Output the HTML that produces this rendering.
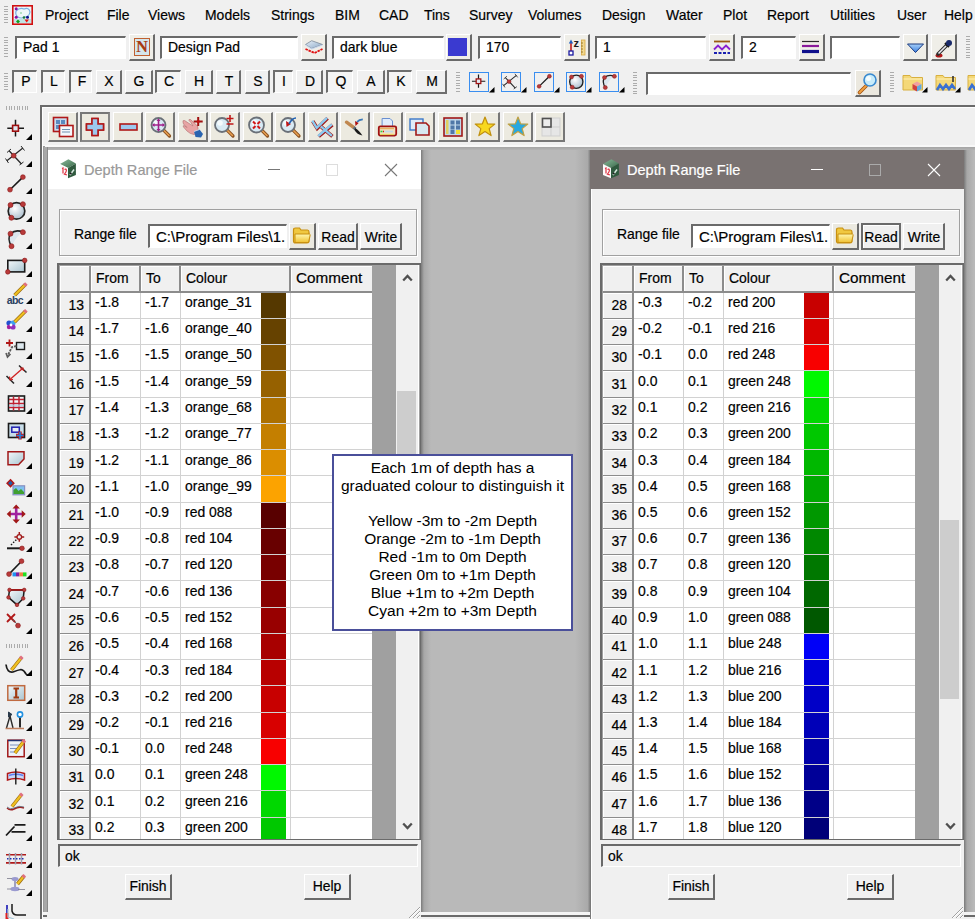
<!DOCTYPE html><html><head><meta charset="utf-8"><style>html,body{margin:0;padding:0;}body{width:975px;height:919px;overflow:hidden;position:relative;background:#f0f0f0;font-family:"Liberation Sans",sans-serif;color:#000;}div{-webkit-text-stroke-width:0.2px;}</style></head><body>
<div style="position:absolute;left:4px;top:6px;width:4px;height:18px;background:repeating-linear-gradient(to bottom,#acacac 0 1px,transparent 1px 2.67px);"></div>
<svg style="position:absolute;left:12px;top:5px;" width="21" height="20" viewBox="0 0 21 20"><rect x="0.8" y="0.8" width="19.4" height="18.4" fill="#eef6f8" stroke="#d01010" stroke-width="1.6"/><path d="M4 6 Q8 2 12 4 Q17 2 18 7 Q17 12 13 12 Q9 14 6 12 Q3 10 4 6Z" fill="none" stroke="#7ab0e0" stroke-width="1.2"/><rect x="2" y="14" width="17" height="4" fill="#bfe4e4"/><circle cx="4.2" cy="3.8" r="1.5" fill="#8a10a0"/><circle cx="4.2" cy="12.2" r="1.5" fill="#8a10a0"/><circle cx="15.5" cy="12.2" r="1.5" fill="#10108a"/><circle cx="12" cy="12.5" r="1.3" fill="#1a7a3a"/><circle cx="9" cy="8" r="1" fill="#a0d8b0"/><path d="M6 14.5 L8 16.5 L6 18.5 L4 16.5Z" fill="#10a020"/><path d="M12.5 14.5 H17 L14.7 17.5Z" fill="#f01010"/></svg>
<div style="position:absolute;left:45px;top:7.10px;font-size:15px;line-height:15px;color:#000;white-space:pre;transform:scaleX(0.93);transform-origin:0 0;">Project</div>
<div style="position:absolute;left:107px;top:7.10px;font-size:15px;line-height:15px;color:#000;white-space:pre;transform:scaleX(0.93);transform-origin:0 0;">File</div>
<div style="position:absolute;left:148px;top:7.10px;font-size:15px;line-height:15px;color:#000;white-space:pre;transform:scaleX(0.93);transform-origin:0 0;">Views</div>
<div style="position:absolute;left:205px;top:7.10px;font-size:15px;line-height:15px;color:#000;white-space:pre;transform:scaleX(0.93);transform-origin:0 0;">Models</div>
<div style="position:absolute;left:271px;top:7.10px;font-size:15px;line-height:15px;color:#000;white-space:pre;transform:scaleX(0.93);transform-origin:0 0;">Strings</div>
<div style="position:absolute;left:335px;top:7.10px;font-size:15px;line-height:15px;color:#000;white-space:pre;transform:scaleX(0.93);transform-origin:0 0;">BIM</div>
<div style="position:absolute;left:379px;top:7.10px;font-size:15px;line-height:15px;color:#000;white-space:pre;transform:scaleX(0.93);transform-origin:0 0;">CAD</div>
<div style="position:absolute;left:424px;top:7.10px;font-size:15px;line-height:15px;color:#000;white-space:pre;transform:scaleX(0.93);transform-origin:0 0;">Tins</div>
<div style="position:absolute;left:469px;top:7.10px;font-size:15px;line-height:15px;color:#000;white-space:pre;transform:scaleX(0.93);transform-origin:0 0;">Survey</div>
<div style="position:absolute;left:528px;top:7.10px;font-size:15px;line-height:15px;color:#000;white-space:pre;transform:scaleX(0.93);transform-origin:0 0;">Volumes</div>
<div style="position:absolute;left:602px;top:7.10px;font-size:15px;line-height:15px;color:#000;white-space:pre;transform:scaleX(0.93);transform-origin:0 0;">Design</div>
<div style="position:absolute;left:666px;top:7.10px;font-size:15px;line-height:15px;color:#000;white-space:pre;transform:scaleX(0.93);transform-origin:0 0;">Water</div>
<div style="position:absolute;left:723px;top:7.10px;font-size:15px;line-height:15px;color:#000;white-space:pre;transform:scaleX(0.93);transform-origin:0 0;">Plot</div>
<div style="position:absolute;left:767px;top:7.10px;font-size:15px;line-height:15px;color:#000;white-space:pre;transform:scaleX(0.93);transform-origin:0 0;">Report</div>
<div style="position:absolute;left:830px;top:7.10px;font-size:15px;line-height:15px;color:#000;white-space:pre;transform:scaleX(0.93);transform-origin:0 0;">Utilities</div>
<div style="position:absolute;left:897px;top:7.10px;font-size:15px;line-height:15px;color:#000;white-space:pre;transform:scaleX(0.93);transform-origin:0 0;">User</div>
<div style="position:absolute;left:944px;top:7.10px;font-size:15px;line-height:15px;color:#000;white-space:pre;transform:scaleX(0.93);transform-origin:0 0;">Help</div>
<div style="position:absolute;left:4px;top:37px;width:4px;height:20px;background:repeating-linear-gradient(to bottom,#acacac 0 1px,transparent 1px 2.67px);"></div>
<div style="position:absolute;left:15px;top:36px;width:111px;height:23px;background:#fff;box-sizing:border-box;border-top:2px solid #6a6a6a;border-left:2px solid #6a6a6a;border-bottom:1px solid #fff;border-right:1px solid #fff;"></div>
<div style="position:absolute;left:23px;top:38.90px;font-size:15px;line-height:15px;color:#000;white-space:pre;transform:scaleX(0.93);transform-origin:0 0;">Pad 1</div>
<div style="position:absolute;left:129px;top:34px;width:26px;height:27px;background:#efeee8;box-sizing:border-box;border-top:1px solid #fff;border-left:1px solid #fff;border-bottom:2px solid #6a6a6a;border-right:2px solid #6a6a6a;"></div>
<div style="position:absolute;left:134px;top:38px;width:16px;height:18px;box-sizing:border-box;border:1px solid #c06030;background:#d4e6ec;color:#a83a10;font:bold 16px/16px 'Liberation Serif',serif;text-align:center;">N</div>
<div style="position:absolute;left:160px;top:36px;width:138px;height:23px;background:#fff;box-sizing:border-box;border-top:2px solid #6a6a6a;border-left:2px solid #6a6a6a;border-bottom:1px solid #fff;border-right:1px solid #fff;"></div>
<div style="position:absolute;left:168px;top:38.90px;font-size:15px;line-height:15px;color:#000;white-space:pre;transform:scaleX(0.93);transform-origin:0 0;">Design Pad</div>
<div style="position:absolute;left:301px;top:34px;width:26px;height:27px;background:#efeee8;box-sizing:border-box;border-top:1px solid #fff;border-left:1px solid #fff;border-bottom:2px solid #6a6a6a;border-right:2px solid #6a6a6a;"></div>
<svg style="position:absolute;left:301px;top:34px;" width="26" height="27" viewBox="0 0 26 27"><defs><linearGradient id="lyg" x1="0" y1="0" x2="1" y2="1"><stop offset="0" stop-color="#e8f0f8"/><stop offset="1" stop-color="#8aa8c8"/></linearGradient></defs><path d="M4.5 10.5 L10.7 6.7 L21.5 10.5 L10.7 14.5Z" fill="url(#lyg)" stroke="#7a8898" stroke-width="0.8"/><path d="M4.5 10.5 L10.7 14.5 L21.5 10.5 L21.5 11.5 L10.7 15.5 L4.5 11.5Z" fill="#c8d8f0"/><path d="M4.5 15 L13.5 19 L21.5 15" stroke="#e01010" stroke-width="1.8" fill="none" stroke-dasharray="2.5 0.8"/></svg>
<div style="position:absolute;left:332px;top:36px;width:112px;height:23px;background:#fff;box-sizing:border-box;border-top:2px solid #6a6a6a;border-left:2px solid #6a6a6a;border-bottom:1px solid #fff;border-right:1px solid #fff;"></div>
<div style="position:absolute;left:340px;top:38.90px;font-size:15px;line-height:15px;color:#000;white-space:pre;transform:scaleX(0.93);transform-origin:0 0;">dark blue</div>
<div style="position:absolute;left:446px;top:34px;width:26px;height:27px;background:#efeee8;box-sizing:border-box;border-top:1px solid #fff;border-left:1px solid #fff;border-bottom:2px solid #6a6a6a;border-right:2px solid #6a6a6a;"></div>
<div style="position:absolute;left:448px;top:38px;width:19px;height:18px;background:#3a3ad0;"></div>
<div style="position:absolute;left:478px;top:36px;width:83px;height:23px;background:#fff;box-sizing:border-box;border-top:2px solid #6a6a6a;border-left:2px solid #6a6a6a;border-bottom:1px solid #fff;border-right:1px solid #fff;"></div>
<div style="position:absolute;left:486px;top:38.90px;font-size:15px;line-height:15px;color:#000;white-space:pre;transform:scaleX(0.93);transform-origin:0 0;">170</div>
<div style="position:absolute;left:564px;top:34px;width:26px;height:27px;background:#efeee8;box-sizing:border-box;border-top:1px solid #fff;border-left:1px solid #fff;border-bottom:2px solid #6a6a6a;border-right:2px solid #6a6a6a;"></div>
<svg style="position:absolute;left:567px;top:37px;" width="20" height="20" viewBox="0 0 20 20"><path d="M4 5 L4 14" stroke="#c02020" stroke-width="1.6"/><path d="M1.8 6.5 L4 2.5 L6.2 6.5Z" fill="#2060c0"/><rect x="2" y="14" width="4" height="4" fill="#fff" stroke="#1a1aa0" stroke-width="1.3"/><text x="6.5" y="10" font-size="11" font-weight="bold" fill="#1a1a1a" font-family="Liberation Sans" style="-webkit-text-stroke-width:0">z</text><rect x="14.5" y="3" width="3.5" height="15" fill="#f0d890" stroke="#d8a840" stroke-width="0.8"/><path d="M14 6 H16 M14 9 H16 M14 12 H16 M14 15 H16" stroke="#8a6a20" stroke-width="0.8"/></svg>
<div style="position:absolute;left:595px;top:36px;width:111px;height:23px;background:#fff;box-sizing:border-box;border-top:2px solid #6a6a6a;border-left:2px solid #6a6a6a;border-bottom:1px solid #fff;border-right:1px solid #fff;"></div>
<div style="position:absolute;left:603px;top:38.90px;font-size:15px;line-height:15px;color:#000;white-space:pre;transform:scaleX(0.93);transform-origin:0 0;">1</div>
<div style="position:absolute;left:709px;top:34px;width:26px;height:27px;background:#efeee8;box-sizing:border-box;border-top:1px solid #fff;border-left:1px solid #fff;border-bottom:2px solid #6a6a6a;border-right:2px solid #6a6a6a;"></div>
<svg style="position:absolute;left:712px;top:37px;" width="20" height="20" viewBox="0 0 20 20"><path d="M2 4.5 H18" stroke="#9a5a10" stroke-width="1.8"/><path d="M2 12.5 L6 8.5 L10 12.5 L14 8.5 L18 12.5" stroke="#8a20d0" stroke-width="1.8" fill="none"/><path d="M2 16 H18" stroke="#1a20b0" stroke-width="2" stroke-dasharray="3 1.5"/></svg>
<div style="position:absolute;left:741px;top:36px;width:55px;height:23px;background:#fff;box-sizing:border-box;border-top:2px solid #6a6a6a;border-left:2px solid #6a6a6a;border-bottom:1px solid #fff;border-right:1px solid #fff;"></div>
<div style="position:absolute;left:749px;top:38.90px;font-size:15px;line-height:15px;color:#000;white-space:pre;transform:scaleX(0.93);transform-origin:0 0;">2</div>
<div style="position:absolute;left:799px;top:34px;width:26px;height:27px;background:#efeee8;box-sizing:border-box;border-top:1px solid #fff;border-left:1px solid #fff;border-bottom:2px solid #6a6a6a;border-right:2px solid #6a6a6a;"></div>
<svg style="position:absolute;left:799px;top:37px;" width="26" height="20" viewBox="0 0 26 20"><path d="M3 4.5 H20" stroke="#2a2a2a" stroke-width="1.2"/><path d="M3 9 H20" stroke="#8a1a9a" stroke-width="2.2"/><path d="M3 14.5 H20" stroke="#10108a" stroke-width="3.2"/></svg>
<div style="position:absolute;left:830px;top:36px;width:70px;height:23px;background:#fff;box-sizing:border-box;border-top:2px solid #6a6a6a;border-left:2px solid #6a6a6a;border-bottom:1px solid #fff;border-right:1px solid #fff;"></div>
<div style="position:absolute;left:903px;top:34px;width:25px;height:27px;background:#efeee8;box-sizing:border-box;border-top:1px solid #fff;border-left:1px solid #fff;border-bottom:2px solid #6a6a6a;border-right:2px solid #6a6a6a;"></div>
<svg style="position:absolute;left:903px;top:37px;" width="25" height="20" viewBox="0 0 25 20"><defs><linearGradient id="tg" x1="0" y1="0" x2="0" y2="1"><stop offset="0" stop-color="#a8d0f8"/><stop offset="1" stop-color="#3a80e0"/></linearGradient></defs><path d="M4.5 7 H20.5 L12.5 15.5Z" fill="url(#tg)" stroke="#1a3a80" stroke-width="1"/></svg>
<div style="position:absolute;left:931px;top:34px;width:26px;height:27px;background:#efeee8;box-sizing:border-box;border-top:1px solid #fff;border-left:1px solid #fff;border-bottom:2px solid #6a6a6a;border-right:2px solid #6a6a6a;"></div>
<svg style="position:absolute;left:931px;top:37px;" width="26" height="22" viewBox="0 0 26 22"><ellipse cx="8" cy="18.5" rx="3.5" ry="2" fill="#b01818"/><path d="M7 17 L15.5 8.5" stroke="#303030" stroke-width="3.6" stroke-linecap="round"/><path d="M7.5 16.5 L15 9" stroke="#e8e8f0" stroke-width="1.6"/><path d="M14 6 L18 10" stroke="#1a1a1a" stroke-width="2"/><circle cx="18" cy="6" r="3" fill="#1a2a6a"/></svg>
<div style="position:absolute;left:966px;top:36px;width:4px;height:24px;background:repeating-linear-gradient(to bottom,#acacac 0 1px,transparent 1px 2.67px);"></div>
<div style="position:absolute;left:4px;top:73px;width:4px;height:18px;background:repeating-linear-gradient(to bottom,#acacac 0 1px,transparent 1px 2.67px);"></div>
<div style="position:absolute;left:12px;top:70px;width:25px;height:23px;background:#f4f4f4;box-sizing:border-box;border-top:2px solid #6e6e6e;border-left:2px solid #6e6e6e;border-bottom:1px solid #fff;border-right:1px solid #fff;"></div>
<div style="position:absolute;left:-174.5px;width:400px;text-align:center;top:72.90px;font-size:15px;line-height:15px;color:#000;white-space:pre;transform:scaleX(0.93);transform-origin:50% 0;">P</div>
<div style="position:absolute;left:41px;top:70px;width:24px;height:23px;background:#f4f4f4;box-sizing:border-box;border-top:2px solid #6e6e6e;border-left:2px solid #6e6e6e;border-bottom:1px solid #fff;border-right:1px solid #fff;"></div>
<div style="position:absolute;left:-146.0px;width:400px;text-align:center;top:72.90px;font-size:15px;line-height:15px;color:#000;white-space:pre;transform:scaleX(0.93);transform-origin:50% 0;">L</div>
<div style="position:absolute;left:69px;top:70px;width:23px;height:23px;background:#f4f4f4;box-sizing:border-box;border-top:2px solid #6e6e6e;border-left:2px solid #6e6e6e;border-bottom:1px solid #fff;border-right:1px solid #fff;"></div>
<div style="position:absolute;left:-118.5px;width:400px;text-align:center;top:72.90px;font-size:15px;line-height:15px;color:#000;white-space:pre;transform:scaleX(0.93);transform-origin:50% 0;">F</div>
<div style="position:absolute;left:96px;top:70px;width:26px;height:24px;background:#f0f0f0;box-sizing:border-box;border-top:1px solid #fff;border-left:1px solid #fff;border-bottom:2px solid #6e6e6e;border-right:2px solid #6e6e6e;"></div>
<div style="position:absolute;left:-91.0px;width:400px;text-align:center;top:73.10px;font-size:15px;line-height:15px;color:#000;white-space:pre;transform:scaleX(0.93);transform-origin:50% 0;">X</div>
<div style="position:absolute;left:125px;top:70px;width:28px;height:24px;background:#f0f0f0;box-sizing:border-box;border-top:1px solid #fff;border-left:1px solid #fff;border-bottom:2px solid #6e6e6e;border-right:2px solid #6e6e6e;"></div>
<div style="position:absolute;left:-61.0px;width:400px;text-align:center;top:73.10px;font-size:15px;line-height:15px;color:#000;white-space:pre;transform:scaleX(0.93);transform-origin:50% 0;">G</div>
<div style="position:absolute;left:155px;top:70px;width:26px;height:23px;background:#f4f4f4;box-sizing:border-box;border-top:2px solid #6e6e6e;border-left:2px solid #6e6e6e;border-bottom:1px solid #fff;border-right:1px solid #fff;"></div>
<div style="position:absolute;left:-31.0px;width:400px;text-align:center;top:72.90px;font-size:15px;line-height:15px;color:#000;white-space:pre;transform:scaleX(0.93);transform-origin:50% 0;">C</div>
<div style="position:absolute;left:185px;top:70px;width:28px;height:24px;background:#f0f0f0;box-sizing:border-box;border-top:1px solid #fff;border-left:1px solid #fff;border-bottom:2px solid #6e6e6e;border-right:2px solid #6e6e6e;"></div>
<div style="position:absolute;left:-1.0px;width:400px;text-align:center;top:73.10px;font-size:15px;line-height:15px;color:#000;white-space:pre;transform:scaleX(0.93);transform-origin:50% 0;">H</div>
<div style="position:absolute;left:216px;top:70px;width:25px;height:24px;background:#f0f0f0;box-sizing:border-box;border-top:1px solid #fff;border-left:1px solid #fff;border-bottom:2px solid #6e6e6e;border-right:2px solid #6e6e6e;"></div>
<div style="position:absolute;left:28.5px;width:400px;text-align:center;top:73.10px;font-size:15px;line-height:15px;color:#000;white-space:pre;transform:scaleX(0.93);transform-origin:50% 0;">T</div>
<div style="position:absolute;left:245px;top:70px;width:25px;height:24px;background:#f0f0f0;box-sizing:border-box;border-top:1px solid #fff;border-left:1px solid #fff;border-bottom:2px solid #6e6e6e;border-right:2px solid #6e6e6e;"></div>
<div style="position:absolute;left:57.5px;width:400px;text-align:center;top:73.10px;font-size:15px;line-height:15px;color:#000;white-space:pre;transform:scaleX(0.93);transform-origin:50% 0;">S</div>
<div style="position:absolute;left:273px;top:70px;width:20px;height:23px;background:#f4f4f4;box-sizing:border-box;border-top:2px solid #6e6e6e;border-left:2px solid #6e6e6e;border-bottom:1px solid #fff;border-right:1px solid #fff;"></div>
<div style="position:absolute;left:84.0px;width:400px;text-align:center;top:72.90px;font-size:15px;line-height:15px;color:#000;white-space:pre;transform:scaleX(0.93);transform-origin:50% 0;">I</div>
<div style="position:absolute;left:296px;top:70px;width:27px;height:24px;background:#f0f0f0;box-sizing:border-box;border-top:1px solid #fff;border-left:1px solid #fff;border-bottom:2px solid #6e6e6e;border-right:2px solid #6e6e6e;"></div>
<div style="position:absolute;left:109.5px;width:400px;text-align:center;top:73.10px;font-size:15px;line-height:15px;color:#000;white-space:pre;transform:scaleX(0.93);transform-origin:50% 0;">D</div>
<div style="position:absolute;left:326px;top:70px;width:27px;height:23px;background:#f4f4f4;box-sizing:border-box;border-top:2px solid #6e6e6e;border-left:2px solid #6e6e6e;border-bottom:1px solid #fff;border-right:1px solid #fff;"></div>
<div style="position:absolute;left:140.5px;width:400px;text-align:center;top:72.90px;font-size:15px;line-height:15px;color:#000;white-space:pre;transform:scaleX(0.93);transform-origin:50% 0;">Q</div>
<div style="position:absolute;left:357px;top:70px;width:28px;height:24px;background:#f0f0f0;box-sizing:border-box;border-top:1px solid #fff;border-left:1px solid #fff;border-bottom:2px solid #6e6e6e;border-right:2px solid #6e6e6e;"></div>
<div style="position:absolute;left:171.0px;width:400px;text-align:center;top:73.10px;font-size:15px;line-height:15px;color:#000;white-space:pre;transform:scaleX(0.93);transform-origin:50% 0;">A</div>
<div style="position:absolute;left:387px;top:70px;width:25px;height:23px;background:#f4f4f4;box-sizing:border-box;border-top:2px solid #6e6e6e;border-left:2px solid #6e6e6e;border-bottom:1px solid #fff;border-right:1px solid #fff;"></div>
<div style="position:absolute;left:200.5px;width:400px;text-align:center;top:72.90px;font-size:15px;line-height:15px;color:#000;white-space:pre;transform:scaleX(0.93);transform-origin:50% 0;">K</div>
<div style="position:absolute;left:416px;top:70px;width:31px;height:24px;background:#f0f0f0;box-sizing:border-box;border-top:1px solid #fff;border-left:1px solid #fff;border-bottom:2px solid #6e6e6e;border-right:2px solid #6e6e6e;"></div>
<div style="position:absolute;left:231.5px;width:400px;text-align:center;top:73.10px;font-size:15px;line-height:15px;color:#000;white-space:pre;transform:scaleX(0.93);transform-origin:50% 0;">M</div>
<div style="position:absolute;left:456px;top:72px;width:4px;height:20px;background:repeating-linear-gradient(to bottom,#acacac 0 1px,transparent 1px 2.67px);"></div>
<div style="position:absolute;left:469px;top:72px;width:20px;height:20px;box-sizing:border-box;border:1.5px solid #3a8ef0;"></div>
<svg style="position:absolute;left:469px;top:72px;" width="20" height="20" viewBox="0 0 20 20"><g transform="translate(0.3,-0.6) scale(0.8)"><path d="M3.3 12.3 H20 M11.5 3.8 V20.5" stroke="#1a1a1a" stroke-width="1.5"/><rect x="8.6" y="9.4" width="5.8" height="5.8" fill="#dfe8f0" stroke="#a01010" stroke-width="1.6"/></g></svg>
<svg style="position:absolute;left:489px;top:87px;" width="6" height="6" viewBox="0 0 6 6"><path d="M5.5 0 L5.5 5.5 L0 5.5Z" fill="#000"/></svg>
<div style="position:absolute;left:501px;top:72px;width:20px;height:20px;box-sizing:border-box;border:1.5px solid #3a8ef0;"></div>
<svg style="position:absolute;left:501px;top:72px;" width="20" height="20" viewBox="0 0 20 20"><g transform="translate(0.3,-0.6) scale(0.8)"><path d="M2.9 17.8 L18.9 5 M5.1 7.7 L17.5 21" stroke="#2a2a2a" stroke-width="1.3"/><path d="M1.5 15.5 L4.5 20 M17 3 L20.5 7.5 M3 9.5 L7 6 M15.5 22 L19.5 19" stroke="#2a2a2a" stroke-width="1"/><circle cx="9.7" cy="12.7" r="2.4" fill="#b83a3a" stroke="#8a1a1a" stroke-width="0.6"/></g></svg>
<svg style="position:absolute;left:521px;top:87px;" width="6" height="6" viewBox="0 0 6 6"><path d="M5.5 0 L5.5 5.5 L0 5.5Z" fill="#000"/></svg>
<div style="position:absolute;left:534px;top:72px;width:20px;height:20px;box-sizing:border-box;border:1.5px solid #3a8ef0;"></div>
<svg style="position:absolute;left:534px;top:72px;" width="20" height="20" viewBox="0 0 20 20"><g transform="translate(0.3,-0.6) scale(0.8)"><path d="M6 18.7 L18.9 6.1" stroke="#1a1a1a" stroke-width="1.6"/><circle cx="6" cy="18.7" r="2.4" fill="#b83a3a" stroke="#8a1a1a" stroke-width="0.6"/><circle cx="18.9" cy="6.1" r="2.4" fill="#b83a3a" stroke="#8a1a1a" stroke-width="0.6"/></g></svg>
<svg style="position:absolute;left:554px;top:87px;" width="6" height="6" viewBox="0 0 6 6"><path d="M5.5 0 L5.5 5.5 L0 5.5Z" fill="#000"/></svg>
<div style="position:absolute;left:566px;top:72px;width:20px;height:20px;box-sizing:border-box;border:1.5px solid #3a8ef0;"></div>
<svg style="position:absolute;left:566px;top:72px;" width="20" height="20" viewBox="0 0 20 20"><g transform="translate(0.3,-0.6) scale(0.8)"><defs><radialGradient id="lg1" cx="0.4" cy="0.35" r="0.7"><stop offset="0" stop-color="#ffffff"/><stop offset="1" stop-color="#a8bccc"/></radialGradient></defs><circle cx="12.5" cy="12.9" r="8.3" fill="url(#lg1)" stroke="#222" stroke-width="1.7"/><circle cx="6.5" cy="7" r="2.5" fill="#b83a3a" stroke="#8a1a1a" stroke-width="0.6"/><circle cx="18.9" cy="6.2" r="2.5" fill="#b83a3a" stroke="#8a1a1a" stroke-width="0.6"/><circle cx="7.4" cy="19.8" r="2.5" fill="#b83a3a" stroke="#8a1a1a" stroke-width="0.6"/></g></svg>
<svg style="position:absolute;left:586px;top:87px;" width="6" height="6" viewBox="0 0 6 6"><path d="M5.5 0 L5.5 5.5 L0 5.5Z" fill="#000"/></svg>
<div style="position:absolute;left:599px;top:72px;width:20px;height:20px;box-sizing:border-box;border:1.5px solid #3a8ef0;"></div>
<svg style="position:absolute;left:599px;top:72px;" width="20" height="20" viewBox="0 0 20 20"><g transform="translate(0.3,-0.6) scale(0.8)"><path d="M7.5 20.2 Q3 13 6.5 7.7 Q12 3 18.9 6.2 Q14 8 7.5 20.2Z" fill="#dce6ee"/><path d="M7.5 20.2 Q3 13 6.5 7.7 Q12 3 18.9 6.2" stroke="#222" stroke-width="1.6" fill="none"/><circle cx="6.5" cy="7.7" r="2.5" fill="#b83a3a" stroke="#8a1a1a" stroke-width="0.6"/><circle cx="18.9" cy="6.2" r="2.5" fill="#b83a3a" stroke="#8a1a1a" stroke-width="0.6"/><circle cx="7.5" cy="20.2" r="2.5" fill="#b83a3a" stroke="#8a1a1a" stroke-width="0.6"/></g></svg>
<svg style="position:absolute;left:619px;top:87px;" width="6" height="6" viewBox="0 0 6 6"><path d="M5.5 0 L5.5 5.5 L0 5.5Z" fill="#000"/></svg>
<div style="position:absolute;left:633px;top:72px;width:4px;height:24px;background:repeating-linear-gradient(to bottom,#acacac 0 1px,transparent 1px 2.67px);"></div>
<div style="position:absolute;left:646px;top:72px;width:205px;height:23px;background:#fff;box-sizing:border-box;border-top:2px solid #6a6a6a;border-left:2px solid #6a6a6a;border-bottom:1px solid #fff;border-right:1px solid #fff;"></div>
<div style="position:absolute;left:855px;top:70px;width:26px;height:27px;background:#ebe8df;box-sizing:border-box;border-top:1px solid #fff;border-left:1px solid #fff;border-bottom:2px solid #6a6a6a;border-right:2px solid #6a6a6a;"></div>
<svg style="position:absolute;left:856px;top:72px;" width="24" height="24" viewBox="0 0 24 24"><path d="M10 14 L3.5 20.5" stroke="#a05010" stroke-width="3.6" stroke-linecap="round"/><path d="M10 14 L3.5 20.5" stroke="#f0a040" stroke-width="2" stroke-linecap="round"/><circle cx="14" cy="8" r="6" fill="#c8ecfa" stroke="#3a8ad0" stroke-width="1.6"/><circle cx="12.5" cy="6.5" r="2.5" fill="#f4fcff"/></svg>
<div style="position:absolute;left:890px;top:72px;width:4px;height:20px;background:repeating-linear-gradient(to bottom,#acacac 0 1px,transparent 1px 2.67px);"></div>
<svg style="position:absolute;left:902px;top:73px;" width="22" height="19" viewBox="0 0 22 19"><path d="M1 2.5 H8 L9.5 4.5 H20.5 V17 H1Z" fill="#f4d878" stroke="#d8b040" stroke-width="1"/><path d="M1.5 6 H20" stroke="#fff0b8" stroke-width="1"/><path d="M10.5 11 L15 8.5 L19.5 11 L15 13.5Z" fill="#f0a0a0"/><path d="M10.5 11 L15 13.5 V18.5 L10.5 16Z" fill="#d04040"/><path d="M15 13.5 L19.5 11 V16 L15 18.5Z" fill="#60a8e0"/></svg>
<svg style="position:absolute;left:922px;top:87px;" width="6" height="6" viewBox="0 0 6 6"><path d="M5.5 0 L5.5 5.5 L0 5.5Z" fill="#000"/></svg>
<svg style="position:absolute;left:935px;top:73px;" width="22" height="19" viewBox="0 0 22 19"><path d="M1 2.5 H8 L9.5 4.5 H20.5 V17 H1Z" fill="#f4d878" stroke="#d8b040" stroke-width="1"/><path d="M1.5 6 H20" stroke="#fff0b8" stroke-width="1"/><path d="M18 3 V9" stroke="#303030" stroke-width="1.6"/><path d="M2 17 L5 12 L8 16 L11 12 L14 16 L17 12 L20 16" stroke="#3a70d0" stroke-width="2.6" fill="none"/></svg>
<svg style="position:absolute;left:955px;top:87px;" width="6" height="6" viewBox="0 0 6 6"><path d="M5.5 0 L5.5 5.5 L0 5.5Z" fill="#000"/></svg>
<svg style="position:absolute;left:967px;top:73px;" width="22" height="19" viewBox="0 0 22 19"><path d="M1 2.5 H8 L9.5 4.5 H20.5 V17 H1Z" fill="#f4d878" stroke="#d8b040" stroke-width="1"/><path d="M1.5 6 H20" stroke="#fff0b8" stroke-width="1"/><path d="M2 17 L5 12 L8 16 L11 12" stroke="#3a70d0" stroke-width="2.6" fill="none"/></svg>
<div style="position:absolute;left:40px;top:105px;width:935px;height:2px;background:#6a6a6a;"></div>
<div style="position:absolute;left:42px;top:107px;width:933px;height:1px;background:#fdfdfd;"></div>
<div style="position:absolute;left:40px;top:105px;width:2px;height:814px;background:#6a6a6a;"></div>
<div style="position:absolute;left:42px;top:107px;width:1px;height:812px;background:#fdfdfd;"></div>
<div style="position:absolute;left:48px;top:112px;width:30px;height:30px;background:#eceae0;box-sizing:border-box;border-top:1px solid #fff;border-left:1px solid #fff;border-bottom:2px solid #777;border-right:2px solid #777;"></div>
<svg style="position:absolute;left:48px;top:112px;" width="30" height="30" viewBox="0 0 30 30"><rect x="5.5" y="5.5" width="14" height="14" fill="#c8dcee" stroke="#b01818" stroke-width="1.6"/><rect x="8" y="8" width="4" height="4" fill="#5a8ac0"/><rect x="13" y="8" width="4" height="4" fill="#5a8ac0"/><rect x="8" y="13" width="4" height="4" fill="#5a8ac0"/><rect x="11.5" y="13.5" width="13.5" height="11" fill="#f4f8fc" stroke="#b01818" stroke-width="1.6"/><path d="M14 17.5 H22 M14 20 H22" stroke="#7090b0" stroke-width="1"/></svg>
<div style="position:absolute;left:80px;top:112px;width:30px;height:30px;box-sizing:border-box;background:#eceae0;border:2px solid #777;border-right-color:#888;border-bottom-color:#888;"></div>
<svg style="position:absolute;left:80px;top:112px;" width="30" height="30" viewBox="0 0 30 30"><path d="M12 6.5 H18 V12 H23.5 V18 H18 V23.5 H12 V18 H6.5 V12 H12Z" fill="#9cc8ee" stroke="#b01818" stroke-width="1.6"/></svg>
<svg style="position:absolute;left:80px;top:112px;" width="30" height="30" viewBox="0 0 30 30"><path d="M12 6.5 H18 V12 H23.5 V18 H18 V23.5 H12 V18 H6.5 V12 H12Z" fill="#9cc8ee" stroke="#b01818" stroke-width="1.6"/></svg>
<div style="position:absolute;left:113px;top:112px;width:30px;height:30px;background:#eceae0;box-sizing:border-box;border-top:1px solid #fff;border-left:1px solid #fff;border-bottom:2px solid #777;border-right:2px solid #777;"></div>
<svg style="position:absolute;left:113px;top:112px;" width="30" height="30" viewBox="0 0 30 30"><rect x="7" y="12" width="17" height="6" fill="#9cc8ee" stroke="#b01818" stroke-width="1.6"/></svg>
<div style="position:absolute;left:145px;top:112px;width:30px;height:30px;background:#eceae0;box-sizing:border-box;border-top:1px solid #fff;border-left:1px solid #fff;border-bottom:2px solid #777;border-right:2px solid #777;"></div>
<svg style="position:absolute;left:145px;top:112px;" width="30" height="30" viewBox="0 0 30 30"><path d="M17.5 17 L24.5 24" stroke="#8a5020" stroke-width="3.2" stroke-linecap="round"/><path d="M18.0 17.5 L24.0 23.5" stroke="#e8a050" stroke-width="1.5" stroke-linecap="round"/><circle cx="13.5" cy="13" r="7" fill="#d8eaf4" stroke="#6a7078" stroke-width="1.8"/><circle cx="11.5" cy="11" r="2.8" fill="#f4fafd"/><path d="M13.5 7.5 V18.5 M8 13 H19" stroke="#a0208a" stroke-width="1.6"/><path d="M11.5 9 L13.5 6.5 L15.5 9Z M11.5 17 L13.5 19.5 L15.5 17Z M9.5 11 L7 13 L9.5 15Z M17.5 11 L20 13 L17.5 15Z" fill="#a0208a"/></svg>
<div style="position:absolute;left:178px;top:112px;width:30px;height:30px;background:#eceae0;box-sizing:border-box;border-top:1px solid #fff;border-left:1px solid #fff;border-bottom:2px solid #777;border-right:2px solid #777;"></div>
<svg style="position:absolute;left:178px;top:112px;" width="30" height="30" viewBox="0 0 30 30"><path d="M5 10 Q4.5 8 6.5 8.5 L15 14 Q13 10 11 8.5 Q10.5 7 12.5 7.5 L19.5 14 Q21 17 19 21 L16 22.5 Q12 22 9 19 L5.5 15 Q4.5 13.5 6 13.5 L9 15.5 L5.5 12Z" fill="#e8a4a4" stroke="#b87878" stroke-width="0.7"/><path d="M16 19.5 L21.5 17.5 L25 22 L23 25.5 L17.5 25Z" fill="#2a64b0"/><path d="M16 19.5 L21.5 17.5" stroke="#d8e8f8" stroke-width="0.8"/><path d="M20.2 5 V14 M15.7 9.5 H24.7" stroke="#a01010" stroke-width="2"/><circle cx="20.2" cy="9.5" r="1.5" fill="#c01010"/></svg>
<div style="position:absolute;left:210px;top:112px;width:30px;height:30px;background:#eceae0;box-sizing:border-box;border-top:1px solid #fff;border-left:1px solid #fff;border-bottom:2px solid #777;border-right:2px solid #777;"></div>
<svg style="position:absolute;left:210px;top:112px;" width="30" height="30" viewBox="0 0 30 30"><path d="M16 17 L23 24" stroke="#8a5020" stroke-width="3.2" stroke-linecap="round"/><path d="M16.5 17.5 L22.5 23.5" stroke="#e8a050" stroke-width="1.5" stroke-linecap="round"/><circle cx="12" cy="13" r="7" fill="#d8eaf4" stroke="#6a7078" stroke-width="1.8"/><circle cx="10" cy="11" r="2.8" fill="#f4fafd"/><path d="M20 3 V10 M16.5 6.5 H23.5 M16.5 12 H23.5" stroke="#c01818" stroke-width="1.6"/></svg>
<div style="position:absolute;left:243px;top:112px;width:30px;height:30px;background:#eceae0;box-sizing:border-box;border-top:1px solid #fff;border-left:1px solid #fff;border-bottom:2px solid #777;border-right:2px solid #777;"></div>
<svg style="position:absolute;left:243px;top:112px;" width="30" height="30" viewBox="0 0 30 30"><path d="M17.5 17 L24.5 24" stroke="#8a5020" stroke-width="3.2" stroke-linecap="round"/><path d="M18.0 17.5 L24.0 23.5" stroke="#e8a050" stroke-width="1.5" stroke-linecap="round"/><circle cx="13.5" cy="13" r="7.5" fill="#d8eaf4" stroke="#6a7078" stroke-width="1.8"/><circle cx="11.5" cy="11" r="3.0" fill="#f4fafd"/><path d="M10 9.5 L12.5 12 M17 9.5 L14.5 12 M10 16.5 L12.5 14 M17 16.5 L14.5 14" stroke="#d01818" stroke-width="2"/></svg>
<div style="position:absolute;left:275px;top:112px;width:30px;height:30px;background:#eceae0;box-sizing:border-box;border-top:1px solid #fff;border-left:1px solid #fff;border-bottom:2px solid #777;border-right:2px solid #777;"></div>
<svg style="position:absolute;left:275px;top:112px;" width="30" height="30" viewBox="0 0 30 30"><path d="M17 17 L24 24" stroke="#8a5020" stroke-width="3.2" stroke-linecap="round"/><path d="M17.5 17.5 L23.5 23.5" stroke="#e8a050" stroke-width="1.5" stroke-linecap="round"/><circle cx="13" cy="13" r="7" fill="#d8eaf4" stroke="#6a7078" stroke-width="1.8"/><circle cx="11" cy="11" r="2.8" fill="#f4fafd"/><path d="M11 9 L11.5 15 L16 12Z" fill="#c01818"/><path d="M14 12 Q17 6 21 6" stroke="#2060b0" stroke-width="1.6" fill="none"/></svg>
<div style="position:absolute;left:308px;top:112px;width:30px;height:30px;background:#eceae0;box-sizing:border-box;border-top:1px solid #fff;border-left:1px solid #fff;border-bottom:2px solid #777;border-right:2px solid #777;"></div>
<svg style="position:absolute;left:308px;top:112px;" width="30" height="30" viewBox="0 0 30 30"><path d="M4.8 9.2 L9.2 16.3 L19.6 6.3" stroke="#a01818" stroke-width="3.6" fill="none"/><path d="M4.3 8.7 L8.7 15.8 L19.1 5.8" stroke="#8ccaf0" stroke-width="2.4" fill="none"/><path d="M10.7 24.5 L24.4 12.9 M13.3 14.8 L24.4 24.4" stroke="#a01818" stroke-width="3.6"/><path d="M10.2 24 L23.9 12.4 M12.8 14.3 L23.9 23.9" stroke="#8ccaf0" stroke-width="2.4"/></svg>
<div style="position:absolute;left:340px;top:112px;width:30px;height:30px;background:#eceae0;box-sizing:border-box;border-top:1px solid #fff;border-left:1px solid #fff;border-bottom:2px solid #777;border-right:2px solid #777;"></div>
<svg style="position:absolute;left:340px;top:112px;" width="30" height="30" viewBox="0 0 30 30"><path d="M6.5 10.2 L13.6 15.4" stroke="#c08850" stroke-width="3.4" stroke-linecap="round"/><path d="M13.6 15.4 L15.5 17" stroke="#607080" stroke-width="3"/><path d="M15 16 Q19 18 22.4 23.6 Q17 22.5 14.5 18Z" fill="#1a1a1a"/><path d="M15 9 L18.7 11 L15.5 14Z" fill="#b01010"/><path d="M17 10 Q19 7.5 22.8 7.3" stroke="#3a78b8" stroke-width="1.8" fill="none"/></svg>
<div style="position:absolute;left:373px;top:112px;width:30px;height:30px;background:#eceae0;box-sizing:border-box;border-top:1px solid #fff;border-left:1px solid #fff;border-bottom:2px solid #777;border-right:2px solid #777;"></div>
<svg style="position:absolute;left:373px;top:112px;" width="30" height="30" viewBox="0 0 30 30"><path d="M9.1 6.5 H17 L19.5 9 V14.5 H9.1Z" fill="#e0ecfc" stroke="#6a90d0" stroke-width="1"/><rect x="5.8" y="14.3" width="17.4" height="9.3" rx="1.5" fill="#f0e0c0" stroke="#a01010" stroke-width="1.8"/><path d="M7 16.5 H21" stroke="#e8b060" stroke-width="1.4"/><path d="M7.5 19.5 H9.5" stroke="#30d040" stroke-width="1.6"/><path d="M10 19.5 H11" stroke="#e01010" stroke-width="1.6"/><path d="M11.5 19.5 H20" stroke="#c0d8e8" stroke-width="1.6"/><path d="M7 22.5 H21" stroke="#e8d060" stroke-width="1.2"/></svg>
<div style="position:absolute;left:405px;top:112px;width:30px;height:30px;background:#eceae0;box-sizing:border-box;border-top:1px solid #fff;border-left:1px solid #fff;border-bottom:2px solid #777;border-right:2px solid #777;"></div>
<svg style="position:absolute;left:405px;top:112px;" width="30" height="30" viewBox="0 0 30 30"><rect x="5" y="7" width="13" height="11" fill="#e0ecf8" stroke="#3a78c8" stroke-width="1.4"/><path d="M11 11 H21 L24 14 V23 H11Z" fill="#d8e8f0" stroke="#a01818" stroke-width="1.6"/></svg>
<div style="position:absolute;left:438px;top:112px;width:30px;height:30px;background:#eceae0;box-sizing:border-box;border-top:1px solid #fff;border-left:1px solid #fff;border-bottom:2px solid #777;border-right:2px solid #777;"></div>
<svg style="position:absolute;left:438px;top:112px;" width="30" height="30" viewBox="0 0 30 30"><rect x="6" y="6" width="18" height="18" fill="#c0d8ea" stroke="#a01818" stroke-width="1.6"/><rect x="8" y="8" width="2.5" height="14" fill="#e0d060"/><rect x="12.5" y="8.5" width="4" height="4" fill="#5078a8"/><rect x="18" y="8.5" width="4" height="4" fill="#5078a8"/><rect x="12.5" y="13.5" width="4" height="4" fill="#5078a8"/><rect x="18" y="13.5" width="4" height="4" fill="#5078a8"/><rect x="12.5" y="18" width="4" height="4" fill="#5078a8"/><rect x="18" y="18" width="4" height="4" fill="#f0e030"/></svg>
<div style="position:absolute;left:470px;top:112px;width:30px;height:30px;background:#eceae0;box-sizing:border-box;border-top:1px solid #fff;border-left:1px solid #fff;border-bottom:2px solid #777;border-right:2px solid #777;"></div>
<svg style="position:absolute;left:470px;top:112px;" width="30" height="30" viewBox="0 0 30 30"><path d="M15 5 L17.6 11.8 L24.8 12.1 L19.2 16.6 L21.1 23.6 L15 19.6 L8.9 23.6 L10.8 16.6 L5.2 12.1 L12.4 11.8Z" fill="#f8d820" stroke="#c09010" stroke-width="1.2" stroke-linejoin="round"/></svg>
<div style="position:absolute;left:503px;top:112px;width:30px;height:30px;background:#eceae0;box-sizing:border-box;border-top:1px solid #fff;border-left:1px solid #fff;border-bottom:2px solid #777;border-right:2px solid #777;"></div>
<svg style="position:absolute;left:503px;top:112px;" width="30" height="30" viewBox="0 0 30 30"><path d="M15 5 L17.6 11.8 L24.8 12.1 L19.2 16.6 L21.1 23.6 L15 19.6 L8.9 23.6 L10.8 16.6 L5.2 12.1 L12.4 11.8Z" fill="#28a8e0" stroke="#c0a040" stroke-width="1.2" stroke-linejoin="round"/></svg>
<div style="position:absolute;left:535px;top:112px;width:30px;height:30px;background:#eceae0;box-sizing:border-box;border-top:1px solid #fff;border-left:1px solid #fff;border-bottom:2px solid #777;border-right:2px solid #777;"></div>
<svg style="position:absolute;left:535px;top:112px;" width="30" height="30" viewBox="0 0 30 30"><rect x="7" y="6" width="18" height="18" fill="#e6e6e6" stroke="#cfcfcf" stroke-width="1"/><path d="M16 6 V24 M7 15 H25" stroke="#cfcfcf" stroke-width="1"/><rect x="7.5" y="6.5" width="8.5" height="8.5" fill="#ececec" stroke="#505050" stroke-width="1.6"/></svg>
<div style="position:absolute;left:43px;top:147px;width:932px;height:772px;background:#b9b9b9;"></div>
<div style="position:absolute;left:43px;top:145px;width:932px;height:2px;background:#f8f8f8;"></div>
<div style="position:absolute;left:43px;top:147px;width:932px;height:3px;background:linear-gradient(to bottom,#a4a4a4,#b4b4b4);"></div>
<div style="position:absolute;left:43px;top:146px;width:2px;height:773px;background:#9a9a9a;"></div>
<div style="position:absolute;left:43px;top:912px;width:932px;height:3px;background:#f4f4f4;"></div>
<div style="position:absolute;left:43px;top:915px;width:932px;height:2px;background:#6a6a6a;"></div>
<div style="position:absolute;left:43px;top:917px;width:932px;height:2px;background:#f0f0f0;"></div>
<div style="position:absolute;left:6px;top:106px;width:24px;height:4px;background:repeating-linear-gradient(to right,#acacac 0 1px,transparent 1px 2.67px);"></div>
<svg style="position:absolute;left:4px;top:116px;" width="28" height="24" viewBox="0 0 28 24"><path d="M3.3 12.3 H20 M11.5 3.8 V20.5" stroke="#1a1a1a" stroke-width="1.5"/><rect x="8.6" y="9.4" width="5.8" height="5.8" fill="#dfe8f0" stroke="#a01010" stroke-width="1.6"/></svg>
<svg style="position:absolute;left:26px;top:134px;" width="6" height="6" viewBox="0 0 6 6"><path d="M6 0 L6 6 L0 6Z" fill="#000"/></svg>
<svg style="position:absolute;left:4px;top:143px;" width="28" height="24" viewBox="0 0 28 24"><path d="M2.9 17.8 L18.9 5 M5.1 7.7 L17.5 21" stroke="#2a2a2a" stroke-width="1.3"/><path d="M1.5 15.5 L4.5 20 M17 3 L20.5 7.5 M3 9.5 L7 6 M15.5 22 L19.5 19" stroke="#2a2a2a" stroke-width="1"/><circle cx="9.7" cy="12.7" r="2.4" fill="#b83a3a" stroke="#8a1a1a" stroke-width="0.6"/></svg>
<svg style="position:absolute;left:26px;top:161px;" width="6" height="6" viewBox="0 0 6 6"><path d="M6 0 L6 6 L0 6Z" fill="#000"/></svg>
<svg style="position:absolute;left:4px;top:171px;" width="28" height="24" viewBox="0 0 28 24"><path d="M6 18.7 L18.9 6.1" stroke="#1a1a1a" stroke-width="1.6"/><circle cx="6" cy="18.7" r="2.4" fill="#b83a3a" stroke="#8a1a1a" stroke-width="0.6"/><circle cx="18.9" cy="6.1" r="2.4" fill="#b83a3a" stroke="#8a1a1a" stroke-width="0.6"/></svg>
<svg style="position:absolute;left:26px;top:188px;" width="6" height="6" viewBox="0 0 6 6"><path d="M6 0 L6 6 L0 6Z" fill="#000"/></svg>
<svg style="position:absolute;left:4px;top:198px;" width="28" height="24" viewBox="0 0 28 24"><defs><radialGradient id="lg1" cx="0.4" cy="0.35" r="0.7"><stop offset="0" stop-color="#ffffff"/><stop offset="1" stop-color="#a8bccc"/></radialGradient></defs><circle cx="12.5" cy="12.9" r="8.3" fill="url(#lg1)" stroke="#222" stroke-width="1.7"/><circle cx="6.5" cy="7" r="2.5" fill="#b83a3a" stroke="#8a1a1a" stroke-width="0.6"/><circle cx="18.9" cy="6.2" r="2.5" fill="#b83a3a" stroke="#8a1a1a" stroke-width="0.6"/><circle cx="7.4" cy="19.8" r="2.5" fill="#b83a3a" stroke="#8a1a1a" stroke-width="0.6"/></svg>
<svg style="position:absolute;left:26px;top:216px;" width="6" height="6" viewBox="0 0 6 6"><path d="M6 0 L6 6 L0 6Z" fill="#000"/></svg>
<svg style="position:absolute;left:4px;top:226px;" width="28" height="24" viewBox="0 0 28 24"><path d="M7.5 20.2 Q3 13 6.5 7.7 Q12 3 18.9 6.2 Q14 8 7.5 20.2Z" fill="#dce6ee"/><path d="M7.5 20.2 Q3 13 6.5 7.7 Q12 3 18.9 6.2" stroke="#222" stroke-width="1.6" fill="none"/><circle cx="6.5" cy="7.7" r="2.5" fill="#b83a3a" stroke="#8a1a1a" stroke-width="0.6"/><circle cx="18.9" cy="6.2" r="2.5" fill="#b83a3a" stroke="#8a1a1a" stroke-width="0.6"/><circle cx="7.5" cy="20.2" r="2.5" fill="#b83a3a" stroke="#8a1a1a" stroke-width="0.6"/></svg>
<svg style="position:absolute;left:26px;top:243px;" width="6" height="6" viewBox="0 0 6 6"><path d="M6 0 L6 6 L0 6Z" fill="#000"/></svg>
<svg style="position:absolute;left:4px;top:253px;" width="28" height="24" viewBox="0 0 28 24"><defs><linearGradient id="lg2" x1="0" y1="0" x2="1" y2="1"><stop offset="0" stop-color="#f4f8fa"/><stop offset="1" stop-color="#a8c4d0"/></linearGradient></defs><rect x="3.8" y="7.4" width="16.9" height="11.5" fill="url(#lg2)" stroke="#1a1a1a" stroke-width="1.6"/><circle cx="20.7" cy="7.4" r="2.3" fill="#b83a3a" stroke="#8a1a1a" stroke-width="0.6"/><circle cx="3.8" cy="18.9" r="2.3" fill="#b83a3a" stroke="#8a1a1a" stroke-width="0.6"/></svg>
<svg style="position:absolute;left:26px;top:271px;" width="6" height="6" viewBox="0 0 6 6"><path d="M6 0 L6 6 L0 6Z" fill="#000"/></svg>
<svg style="position:absolute;left:4px;top:281px;" width="28" height="24" viewBox="0 0 28 24"><text x="2.8" y="22.8" font-size="10.5" font-weight="bold" fill="#2a4060" font-family="Liberation Sans" letter-spacing="-0.6">abc</text><path d="M10.6 14.3 L21.6 3.3" stroke="#9a6a10" stroke-width="3.6" stroke-linecap="butt"/><path d="M10.6 14.3 L21.6 3.3" stroke="#f0c020" stroke-width="2.2"/><path d="M20.400000000000002 4.5 L22.400000000000002 2.5" stroke="#e07080" stroke-width="3.6"/></svg>
<svg style="position:absolute;left:26px;top:298px;" width="6" height="6" viewBox="0 0 6 6"><path d="M6 0 L6 6 L0 6Z" fill="#000"/></svg>
<svg style="position:absolute;left:4px;top:308px;" width="28" height="24" viewBox="0 0 28 24"><circle cx="5" cy="15" r="2.6" fill="#2050d0"/><circle cx="9" cy="15" r="2.6" fill="#40a0f0"/><circle cx="9" cy="19" r="2.6" fill="#9030c0"/><circle cx="5" cy="19" r="2.2" fill="#a020a0"/><circle cx="7" cy="17" r="1.4" fill="#fff"/><path d="M10.6 14 L21.6 3" stroke="#9a6a10" stroke-width="3.6" stroke-linecap="butt"/><path d="M10.6 14 L21.6 3" stroke="#f0c020" stroke-width="2.2"/><path d="M20.400000000000002 4.2 L22.400000000000002 2.2" stroke="#e07080" stroke-width="3.6"/></svg>
<svg style="position:absolute;left:26px;top:326px;" width="6" height="6" viewBox="0 0 6 6"><path d="M6 0 L6 6 L0 6Z" fill="#000"/></svg>
<svg style="position:absolute;left:4px;top:336px;" width="28" height="24" viewBox="0 0 28 24"><path d="M5.5 3.5 V10.5 M2 7 H9" stroke="#b01818" stroke-width="1.8"/><rect x="12.5" y="6.5" width="8" height="7" fill="#dde8ee" stroke="#1a1a1a" stroke-width="1.4"/><path d="M12.5 10 L8 11 L3.5 20" stroke="#5a5a5a" stroke-width="1.8" fill="none" stroke-dasharray="2.5 1"/><path d="M2 17 L3.5 21 L6.5 18" stroke="#5a5a5a" stroke-width="1.6" fill="none"/></svg>
<svg style="position:absolute;left:26px;top:353px;" width="6" height="6" viewBox="0 0 6 6"><path d="M6 0 L6 6 L0 6Z" fill="#000"/></svg>
<svg style="position:absolute;left:4px;top:363px;" width="28" height="24" viewBox="0 0 28 24"><path d="M2.5 13 L10 20.5 M15 2.5 L22.5 9.5" stroke="#2a2a2a" stroke-width="1.6"/><path d="M6.5 16 L18.5 5.5" stroke="#d02020" stroke-width="1.3"/><path d="M5.5 13.5 L6 16.8 L9 16.5 M16 5 L19 5 L19.5 8" stroke="#d02020" stroke-width="1.2" fill="none"/></svg>
<svg style="position:absolute;left:26px;top:381px;" width="6" height="6" viewBox="0 0 6 6"><path d="M6 0 L6 6 L0 6Z" fill="#000"/></svg>
<svg style="position:absolute;left:4px;top:391px;" width="28" height="24" viewBox="0 0 28 24"><rect x="4.5" y="5" width="16" height="15" fill="#f0f4f6" stroke="#1a1a1a" stroke-width="1.6"/><path d="M5 8.5 H20 M5 12.5 H20 M5 16.5 H20" stroke="#c02030" stroke-width="1.5"/><path d="M9.5 5.5 V19.5 M15 5.5 V19.5" stroke="#c02030" stroke-width="1.5"/><rect x="5.5" y="13.5" width="14" height="2.2" fill="#b8cce0" opacity="0.8"/></svg>
<svg style="position:absolute;left:26px;top:408px;" width="6" height="6" viewBox="0 0 6 6"><path d="M6 0 L6 6 L0 6Z" fill="#000"/></svg>
<svg style="position:absolute;left:4px;top:418px;" width="28" height="24" viewBox="0 0 28 24"><rect x="4.5" y="5.5" width="16" height="14" fill="#c8dde8" stroke="#1a1a1a" stroke-width="1.6"/><rect x="7.8" y="9.2" width="7.5" height="5" fill="#e8eef4" stroke="#2020b0" stroke-width="1.5"/><path d="M16 13.5 V21.5 M12 17.5 H20" stroke="#c01818" stroke-width="3.4"/><path d="M16 14 V21 M12.5 17.5 H19.5" stroke="#2080e0" stroke-width="1.6"/></svg>
<svg style="position:absolute;left:26px;top:436px;" width="6" height="6" viewBox="0 0 6 6"><path d="M6 0 L6 6 L0 6Z" fill="#000"/></svg>
<svg style="position:absolute;left:4px;top:446px;" width="28" height="24" viewBox="0 0 28 24"><path d="M4 5.8 H20 V13 L14.5 18.8 H4Z" fill="url(#lg2)" stroke="#a01818" stroke-width="1.5"/></svg>
<svg style="position:absolute;left:26px;top:463px;" width="6" height="6" viewBox="0 0 6 6"><path d="M6 0 L6 6 L0 6Z" fill="#000"/></svg>
<svg style="position:absolute;left:4px;top:473px;" width="28" height="24" viewBox="0 0 28 24"><path d="M6.5 6.8 L9.8 10.2 L6.5 13.6 L3.1 10.2Z" fill="#2060b0" stroke="#b01818" stroke-width="1.5"/><rect x="9" y="12.8" width="11.6" height="9" fill="#80c0f0" stroke="#8890c0" stroke-width="1.2"/><path d="M9.5 21 L9.5 17 L12 15 L14.5 18 L17 16 L20 19 L20 21Z" fill="#40a030"/></svg>
<svg style="position:absolute;left:26px;top:491px;" width="6" height="6" viewBox="0 0 6 6"><path d="M6 0 L6 6 L0 6Z" fill="#000"/></svg>
<svg style="position:absolute;left:4px;top:501px;" width="28" height="24" viewBox="0 0 28 24"><path d="M12.2 6 V20 M5.2 13 H19.2" stroke="#a020a0" stroke-width="2.6"/><path d="M8.5 7.5 L12.2 3.5 L15.9 7.5Z M8.5 18.5 L12.2 22.5 L15.9 18.5Z M6.7 9.3 L2.7 13 L6.7 16.7Z M17.7 9.3 L21.7 13 L17.7 16.7Z" fill="#a01818"/></svg>
<svg style="position:absolute;left:26px;top:518px;" width="6" height="6" viewBox="0 0 6 6"><path d="M6 0 L6 6 L0 6Z" fill="#000"/></svg>
<svg style="position:absolute;left:4px;top:528px;" width="28" height="24" viewBox="0 0 28 24"><path d="M3 20.3 H17" stroke="#1a1a1a" stroke-width="2"/><path d="M7 17 L13 11" stroke="#1a1a1a" stroke-width="1.4" stroke-dasharray="1.5 1.5"/><path d="M15.3 4 V13.8 M10.4 8.9 H20.2" stroke="#a01818" stroke-width="1.5"/><circle cx="15.3" cy="8.9" r="2.3" fill="#eee" stroke="#a01818" stroke-width="1.3"/><circle cx="18" cy="20.3" r="2.3" fill="#b83a3a" stroke="#8a1a1a" stroke-width="0.6"/></svg>
<svg style="position:absolute;left:26px;top:546px;" width="6" height="6" viewBox="0 0 6 6"><path d="M6 0 L6 6 L0 6Z" fill="#000"/></svg>
<svg style="position:absolute;left:4px;top:556px;" width="28" height="24" viewBox="0 0 28 24"><path d="M5 18.1 L17.5 5.2" stroke="#1a1a1a" stroke-width="1.6"/><circle cx="5" cy="18.1" r="2.4" fill="#b83a3a" stroke="#8a1a1a" stroke-width="0.6"/><circle cx="17.5" cy="5.2" r="2.4" fill="#b83a3a" stroke="#8a1a1a" stroke-width="0.6"/><rect x="8.5" y="16.4" width="3.5" height="4" fill="#2090f0"/><rect x="12" y="16.4" width="3.5" height="4" fill="#8020a0"/><rect x="15.5" y="16.4" width="3.5" height="4" fill="#f08040"/><rect x="19" y="16.4" width="3.5" height="4" fill="#20e020"/></svg>
<svg style="position:absolute;left:26px;top:573px;" width="6" height="6" viewBox="0 0 6 6"><path d="M6 0 L6 6 L0 6Z" fill="#000"/></svg>
<svg style="position:absolute;left:4px;top:583px;" width="28" height="24" viewBox="0 0 28 24"><path d="M5.5 6.9 H20.2 L19.2 15.4 L13 21.9 L4.5 14.4Z" fill="url(#lg2)" stroke="#1a1a1a" stroke-width="1.5"/><path d="M4 6.9 H21.5" stroke="#a01818" stroke-width="1.8"/><circle cx="5.5" cy="6.9" r="1.8" fill="#b83a3a" stroke="#8a1a1a" stroke-width="0.6"/><circle cx="20.2" cy="6.9" r="1.8" fill="#b83a3a" stroke="#8a1a1a" stroke-width="0.6"/><circle cx="19.2" cy="15.4" r="1.8" fill="#b83a3a" stroke="#8a1a1a" stroke-width="0.6"/><circle cx="13" cy="21.9" r="1.8" fill="#b83a3a" stroke="#8a1a1a" stroke-width="0.6"/><circle cx="4.5" cy="14.4" r="1.8" fill="#b83a3a" stroke="#8a1a1a" stroke-width="0.6"/></svg>
<svg style="position:absolute;left:26px;top:600px;" width="6" height="6" viewBox="0 0 6 6"><path d="M6 0 L6 6 L0 6Z" fill="#000"/></svg>
<svg style="position:absolute;left:4px;top:610px;" width="28" height="24" viewBox="0 0 28 24"><path d="M3 4 L11 12 M11 4 L3 12" stroke="#b01818" stroke-width="1.8"/><path d="M9 10 L15 16" stroke="#5a5a5a" stroke-width="1.2" stroke-dasharray="1.5 1"/><circle cx="14" cy="15.6" r="2.4" fill="#b83a3a" stroke="#8a1a1a" stroke-width="0.6"/></svg>
<svg style="position:absolute;left:26px;top:628px;" width="6" height="6" viewBox="0 0 6 6"><path d="M6 0 L6 6 L0 6Z" fill="#000"/></svg>
<div style="position:absolute;left:6px;top:644px;width:24px;height:4px;background:repeating-linear-gradient(to right,#acacac 0 1px,transparent 1px 2.67px);"></div>
<svg style="position:absolute;left:4px;top:653px;" width="28" height="24" viewBox="0 0 28 24"><path d="M2 11.5 Q3 20 9 19 Q14 17 17 16.5 Q20 17 22 21 Q24 23 27 21" stroke="#1a1a1a" stroke-width="1.7" fill="none"/><path d="M7.5 17 L17.5 4.5" stroke="#9a6a10" stroke-width="3.6" stroke-linecap="butt"/><path d="M7.5 17 L17.5 4.5" stroke="#f0c020" stroke-width="2.2"/><path d="M16.3 5.7 L18.3 3.7" stroke="#e07080" stroke-width="3.6"/></svg>
<svg style="position:absolute;left:26px;top:670px;" width="6" height="6" viewBox="0 0 6 6"><path d="M6 0 L6 6 L0 6Z" fill="#000"/></svg>
<svg style="position:absolute;left:4px;top:680px;" width="28" height="24" viewBox="0 0 28 24"><rect x="3.8" y="5.7" width="16.9" height="14.6" fill="url(#lg2)" stroke="#c06a40" stroke-width="1.5"/><path d="M9.5 8.5 H15 M9.5 17.5 H15 M12.2 8.5 V17.5" stroke="#a03a10" stroke-width="2.2"/></svg>
<svg style="position:absolute;left:26px;top:698px;" width="6" height="6" viewBox="0 0 6 6"><path d="M6 0 L6 6 L0 6Z" fill="#000"/></svg>
<svg style="position:absolute;left:4px;top:708px;" width="28" height="24" viewBox="0 0 28 24"><path d="M6 8 L2.5 20 M6 8 L9 20" stroke="#2a2a2a" stroke-width="1.4"/><path d="M4.5 4 L8 6.5 L4.5 9Z" fill="#2a3a4a" stroke="#2a3a4a"/><path d="M16 9 V19.5" stroke="#2a2a2a" stroke-width="2"/><circle cx="16" cy="6.5" r="2.6" fill="#fff" stroke="#2090e0" stroke-width="1.6"/><path d="M1.5 20.5 H20" stroke="#c08060" stroke-width="1.5"/></svg>
<svg style="position:absolute;left:26px;top:725px;" width="6" height="6" viewBox="0 0 6 6"><path d="M6 0 L6 6 L0 6Z" fill="#000"/></svg>
<svg style="position:absolute;left:4px;top:735px;" width="28" height="24" viewBox="0 0 28 24"><rect x="3.8" y="5.2" width="16.4" height="16.5" fill="#eef2f8" stroke="#a01818" stroke-width="1.5"/><path d="M4 5.5 H19" stroke="#203070" stroke-width="1.5"/><path d="M6 10 H16 M6 13.5 H14 M6 17 H12" stroke="#7890c0" stroke-width="1"/><path d="M11 18 L20 6" stroke="#9a6a10" stroke-width="3.6" stroke-linecap="butt"/><path d="M11 18 L20 6" stroke="#f0c020" stroke-width="2.2"/><path d="M18.8 7.2 L20.8 5.2" stroke="#e07080" stroke-width="3.6"/></svg>
<svg style="position:absolute;left:26px;top:753px;" width="6" height="6" viewBox="0 0 6 6"><path d="M6 0 L6 6 L0 6Z" fill="#000"/></svg>
<svg style="position:absolute;left:4px;top:763px;" width="28" height="24" viewBox="0 0 28 24"><path d="M3.5 10.5 Q12 7.5 20.5 10.5 V17 Q12 14 3.5 17Z" fill="#c8d8f8" stroke="#b01818" stroke-width="1.5"/><path d="M5 12.5 Q12 10 19 12.5" stroke="#6080f0" stroke-width="1.5" fill="none"/><path d="M11.8 5.5 V21.5" stroke="#1a1a1a" stroke-width="1.4"/></svg>
<svg style="position:absolute;left:26px;top:780px;" width="6" height="6" viewBox="0 0 6 6"><path d="M6 0 L6 6 L0 6Z" fill="#000"/></svg>
<svg style="position:absolute;left:4px;top:790px;" width="28" height="24" viewBox="0 0 28 24"><path d="M3 18 Q6 21 10 19 Q15 16 20 18" stroke="#a02020" stroke-width="1.5" fill="none"/><path d="M3 17 Q6 20 10 18 Q15 15 20 17" stroke="#5a6a7a" stroke-width="0.8" fill="none"/><path d="M8 16.5 L17.5 4.5" stroke="#9a6a10" stroke-width="3.6" stroke-linecap="butt"/><path d="M8 16.5 L17.5 4.5" stroke="#f0c020" stroke-width="2.2"/><path d="M16.3 5.7 L18.3 3.7" stroke="#e07080" stroke-width="3.6"/></svg>
<svg style="position:absolute;left:26px;top:808px;" width="6" height="6" viewBox="0 0 6 6"><path d="M6 0 L6 6 L0 6Z" fill="#000"/></svg>
<svg style="position:absolute;left:4px;top:817px;" width="28" height="24" viewBox="0 0 28 24"><path d="M10.5 7.8 H21.5 M7.5 14.8 H21.5" stroke="#1a1a1a" stroke-width="1.8"/><path d="M2 18.5 L10.5 9.5" stroke="#1a1a1a" stroke-width="1.8"/></svg>
<svg style="position:absolute;left:26px;top:835px;" width="6" height="6" viewBox="0 0 6 6"><path d="M6 0 L6 6 L0 6Z" fill="#000"/></svg>
<svg style="position:absolute;left:4px;top:845px;" width="28" height="24" viewBox="0 0 28 24"><path d="M2 9.7 H22 M2 17.9 H22" stroke="#b01818" stroke-width="1.6"/><path d="M5.5 8 V19.5 M11.5 8 V19.5 M17.5 8 V19.5" stroke="#a0a0b0" stroke-width="1.5"/><path d="M3 13.8 H21" stroke="#2030b0" stroke-width="1.5" stroke-dasharray="1.5 1.5"/></svg>
<svg style="position:absolute;left:26px;top:862px;" width="6" height="6" viewBox="0 0 6 6"><path d="M6 0 L6 6 L0 6Z" fill="#000"/></svg>
<svg style="position:absolute;left:4px;top:872px;" width="28" height="24" viewBox="0 0 28 24"><ellipse cx="11" cy="7" rx="3.5" ry="2" fill="#9a9ad0"/><ellipse cx="11" cy="17" rx="4.5" ry="2.2" fill="#9a9ad0"/><path d="M11 9 V15" stroke="#a0a0c0" stroke-width="2"/><path d="M3 6.5 H8 M3 17 H7 M14 17.5 H21" stroke="#7a7a8a" stroke-width="0.8"/><path d="M13.5 12 L20 4" stroke="#9a6a10" stroke-width="3.6" stroke-linecap="butt"/><path d="M13.5 12 L20 4" stroke="#f0c020" stroke-width="2.2"/><path d="M18.8 5.2 L20.8 3.2" stroke="#e07080" stroke-width="3.6"/></svg>
<svg style="position:absolute;left:26px;top:890px;" width="6" height="6" viewBox="0 0 6 6"><path d="M6 0 L6 6 L0 6Z" fill="#000"/></svg>
<svg style="position:absolute;left:4px;top:903px;" width="28" height="16" viewBox="0 0 28 16"><path d="M3 2 V14" stroke="#4040c0" stroke-width="2"/><path d="M3 10 V16" stroke="#e02020" stroke-width="3"/><path d="M8 1 V8 Q9 12 13 12 H22" stroke="#1a1a1a" stroke-width="1.5" fill="none"/><path d="M4 6 V14 L10 16" stroke="#a8c8d8" stroke-width="1.2" fill="none"/></svg>
<div style="position:absolute;left:421px;top:150px;width:10px;height:762px;background:linear-gradient(to right,#7a7a7a,#a8a8a8 30%,#b9b9b9);"></div>
<div style="position:absolute;left:47px;top:150px;width:374px;height:769px;background:#f0f0f0;"></div>
<div style="position:absolute;left:44px;top:147px;width:3px;height:765px;background:#a8a8a8;"></div>
<div style="position:absolute;left:47px;top:147px;width:1px;height:765px;background:#8a8a8a;"></div>
<div style="position:absolute;left:48px;top:150px;width:373px;height:39px;background:#fff;"></div>
<svg style="position:absolute;left:60px;top:159px;" width="18" height="21" viewBox="0 0 18 21"><defs><linearGradient id="cg" x1="0" y1="0" x2="1" y2="1"><stop offset="0" stop-color="#8ab89a"/><stop offset="1" stop-color="#3a6a4a"/></linearGradient></defs><path d="M0 5.1 L8.4 0.3 L15.9 4.5 L8 9Z" fill="url(#cg)"/><path d="M8 9 L15.9 4.5 L15.9 15.9 L8 19.3Z" fill="#2f5a3e"/><path d="M0 5.1 L8 9 L8 19.3 L0 15.9Z" fill="#fbfbfb"/><path d="M2 9.5 L3 9 V14.5 M4.5 10.5 Q6.2 9.3 6.4 11.5 Q6.3 13 4.5 15.2 L6.8 15.8" stroke="#e03040" stroke-width="1.2" fill="none"/><path d="M10 16 L14 10.5" stroke="#d8e8e0" stroke-width="1.5"/><circle cx="10.8" cy="14.5" r="1" fill="#1a1a1a"/></svg>
<div style="position:absolute;left:84px;top:161.50px;font-size:15px;line-height:15px;color:#999;white-space:pre;transform:scaleX(0.97);transform-origin:0 0;">Depth Range File</div>
<div style="position:absolute;left:268px;top:169px;width:12px;height:1px;background:#777;"></div>
<div style="position:absolute;left:326px;top:164px;width:12px;height:12px;box-sizing:border-box;border:1px solid #ddd;"></div>
<svg style="position:absolute;left:384px;top:163px;" width="14" height="14" viewBox="0 0 14 14"><path d="M1 1 L13 13 M13 1 L1 13" stroke="#777" stroke-width="1.1"/></svg>
<div style="position:absolute;left:59px;top:209px;width:358px;height:47px;box-sizing:border-box;border:1px solid #a0a0a0;border-right-color:#a0a0a0;box-shadow:inset 1px 1px 0 #fff, 1px 1px 0 #fff;"></div>
<div style="position:absolute;left:74px;top:226.00px;font-size:15px;line-height:15px;color:#000;white-space:pre;transform:scaleX(0.93);transform-origin:0 0;">Range file</div>
<div style="position:absolute;left:148px;top:224px;width:139px;height:24px;background:#fff;box-sizing:border-box;border-top:2px solid #6a6a6a;border-left:2px solid #6a6a6a;border-bottom:1px solid #fff;border-right:1px solid #fff;"></div>
<div style="position:absolute;left:150px;top:226px;width:136px;height:21px;overflow:hidden;"><div style="position:absolute;left:6px;top:3.30px;font-size:15px;line-height:15px;white-space:pre;">C:\Program Files\1.</div></div>
<div style="position:absolute;left:289px;top:223px;width:27px;height:27px;background:#ebe9e0;box-sizing:border-box;border-top:1px solid #fff;border-left:1px solid #fff;border-bottom:2px solid #6a6a6a;border-right:2px solid #6a6a6a;"></div>
<svg style="position:absolute;left:292px;top:227px;" width="20" height="20" viewBox="0 0 20 20"><defs><linearGradient id="fg" x1="0" y1="0" x2="0" y2="1"><stop offset="0" stop-color="#fff8b0"/><stop offset="1" stop-color="#f0c030"/></linearGradient></defs><path d="M1.5 3 Q1.5 1 3.5 1 L7.5 1 L9 3 L15.5 3 Q17 3 17 5 L17 14.5 Q17 16 15 16 L3.5 16 Q1.5 16 1.5 14Z" fill="#f0c840" stroke="#c89010" stroke-width="1.2"/><path d="M3 7 L17.5 7 Q18.5 7 18 9 L16.5 15.5 L3 15.5Z" fill="url(#fg)" stroke="#c89010" stroke-width="1"/></svg>
<div style="position:absolute;left:318px;top:223px;width:40px;height:27px;background:#f0f0f0;box-sizing:border-box;border-top:1px solid #fff;border-left:1px solid #fff;border-bottom:2px solid #6a6a6a;border-right:2px solid #6a6a6a;"></div>
<div style="position:absolute;left:138px;width:400px;text-align:center;top:228.80px;font-size:15px;line-height:15px;color:#000;white-space:pre;transform:scaleX(0.93);transform-origin:50% 0;">Read</div>
<div style="position:absolute;left:360px;top:223px;width:42px;height:27px;background:#f0f0f0;box-sizing:border-box;border-top:1px solid #fff;border-left:1px solid #fff;border-bottom:2px solid #6a6a6a;border-right:2px solid #6a6a6a;"></div>
<div style="position:absolute;left:181px;width:400px;text-align:center;top:228.80px;font-size:15px;line-height:15px;color:#000;white-space:pre;transform:scaleX(0.93);transform-origin:50% 0;">Write</div>
<div style="position:absolute;left:57px;top:263px;width:364px;height:577px;box-sizing:border-box;border-top:2px solid #6a6a6a;border-left:2px solid #6a6a6a;border-bottom:1px solid #6a6a6a;border-right:1px solid #6a6a6a;background:#a0a0a0;overflow:hidden;">
<div style="position:absolute;left:1px;top:1px;width:312px;height:25px;background:#f0f0f0;"></div><div style="position:absolute;left:1px;top:1px;width:312px;height:1px;background:#fff;"></div><div style="position:absolute;left:1px;top:1px;width:1px;height:25px;background:#fff;"></div><div style="position:absolute;left:1px;top:26px;width:312px;height:2px;background:#8c8c8c;"></div><div style="position:absolute;left:80px;top:1px;width:2px;height:27px;background:#8c8c8c;"></div><div style="position:absolute;left:82px;top:2px;width:1px;height:24px;background:#fff;"></div><div style="position:absolute;left:120px;top:1px;width:2px;height:27px;background:#8c8c8c;"></div><div style="position:absolute;left:122px;top:2px;width:1px;height:24px;background:#fff;"></div><div style="position:absolute;left:230px;top:1px;width:2px;height:27px;background:#8c8c8c;"></div><div style="position:absolute;left:232px;top:2px;width:1px;height:24px;background:#fff;"></div><div style="position:absolute;left:30px;top:1px;width:2px;height:574px;background:#8c8c8c;"></div><div style="position:absolute;left:32px;top:2px;width:1px;height:24px;background:#fff;"></div><div style="position:absolute;left:37px;top:5.30px;font-size:15px;line-height:15px;white-space:pre;transform:scaleX(0.93);transform-origin:0 0;">From</div><div style="position:absolute;left:87px;top:5.30px;font-size:15px;line-height:15px;white-space:pre;transform:scaleX(0.93);transform-origin:0 0;">To</div><div style="position:absolute;left:127px;top:5.30px;font-size:15px;line-height:15px;white-space:pre;transform:scaleX(0.93);transform-origin:0 0;">Colour</div><div style="position:absolute;left:237px;top:5.30px;font-size:15px;line-height:15px;white-space:pre;transform:scaleX(0.93);transform-origin:0 0;transform:scaleX(1.02);">Comment</div><div style="position:absolute;left:1px;top:28px;width:29px;height:25px;background:#f0f0f0;"></div><div style="position:absolute;left:1px;top:28px;width:29px;height:1px;background:#fff;"></div><div style="position:absolute;left:1px;top:28px;width:1px;height:25px;background:#fff;"></div><div style="position:absolute;left:1px;top:53px;width:29px;height:1px;background:#8c8c8c;"></div><div style="position:absolute;left:1px;width:24px;text-align:right;top:32.10px;font-size:15px;line-height:15px;white-space:pre;transform:scaleX(0.93);transform-origin:100% 0;">13</div><div style="position:absolute;left:32px;top:28px;width:281px;height:25px;background:#fff;"></div><div style="position:absolute;left:32px;top:53px;width:281px;height:1px;background:#d2d2d2;"></div><div style="position:absolute;left:81px;top:28px;width:1px;height:26px;background:#d2d2d2;"></div><div style="position:absolute;left:121px;top:28px;width:1px;height:26px;background:#d2d2d2;"></div><div style="position:absolute;left:231px;top:28px;width:1px;height:26px;background:#d2d2d2;"></div><div style="position:absolute;left:36px;top:29.20px;font-size:15px;line-height:15px;white-space:pre;transform:scaleX(0.93);transform-origin:0 0;">-1.8</div><div style="position:absolute;left:86px;top:29.20px;font-size:15px;line-height:15px;white-space:pre;transform:scaleX(0.93);transform-origin:0 0;">-1.7</div><div style="position:absolute;left:126px;top:29.20px;font-size:15px;line-height:15px;white-space:pre;transform:scaleX(0.93);transform-origin:0 0;">orange_31</div><div style="position:absolute;left:202px;top:28px;width:25px;height:25px;background:#553800;"></div><div style="position:absolute;left:1px;top:54px;width:29px;height:25px;background:#f0f0f0;"></div><div style="position:absolute;left:1px;top:54px;width:29px;height:1px;background:#fff;"></div><div style="position:absolute;left:1px;top:54px;width:1px;height:25px;background:#fff;"></div><div style="position:absolute;left:1px;top:79px;width:29px;height:1px;background:#8c8c8c;"></div><div style="position:absolute;left:1px;width:24px;text-align:right;top:58.10px;font-size:15px;line-height:15px;white-space:pre;transform:scaleX(0.93);transform-origin:100% 0;">14</div><div style="position:absolute;left:32px;top:54px;width:281px;height:25px;background:#fff;"></div><div style="position:absolute;left:32px;top:79px;width:281px;height:1px;background:#d2d2d2;"></div><div style="position:absolute;left:81px;top:54px;width:1px;height:26px;background:#d2d2d2;"></div><div style="position:absolute;left:121px;top:54px;width:1px;height:26px;background:#d2d2d2;"></div><div style="position:absolute;left:231px;top:54px;width:1px;height:26px;background:#d2d2d2;"></div><div style="position:absolute;left:36px;top:55.20px;font-size:15px;line-height:15px;white-space:pre;transform:scaleX(0.93);transform-origin:0 0;">-1.7</div><div style="position:absolute;left:86px;top:55.20px;font-size:15px;line-height:15px;white-space:pre;transform:scaleX(0.93);transform-origin:0 0;">-1.6</div><div style="position:absolute;left:126px;top:55.20px;font-size:15px;line-height:15px;white-space:pre;transform:scaleX(0.93);transform-origin:0 0;">orange_40</div><div style="position:absolute;left:202px;top:54px;width:25px;height:25px;background:#664200;"></div><div style="position:absolute;left:1px;top:80px;width:29px;height:25px;background:#f0f0f0;"></div><div style="position:absolute;left:1px;top:80px;width:29px;height:1px;background:#fff;"></div><div style="position:absolute;left:1px;top:80px;width:1px;height:25px;background:#fff;"></div><div style="position:absolute;left:1px;top:105px;width:29px;height:1px;background:#8c8c8c;"></div><div style="position:absolute;left:1px;width:24px;text-align:right;top:84.10px;font-size:15px;line-height:15px;white-space:pre;transform:scaleX(0.93);transform-origin:100% 0;">15</div><div style="position:absolute;left:32px;top:80px;width:281px;height:25px;background:#fff;"></div><div style="position:absolute;left:32px;top:105px;width:281px;height:1px;background:#d2d2d2;"></div><div style="position:absolute;left:81px;top:80px;width:1px;height:26px;background:#d2d2d2;"></div><div style="position:absolute;left:121px;top:80px;width:1px;height:26px;background:#d2d2d2;"></div><div style="position:absolute;left:231px;top:80px;width:1px;height:26px;background:#d2d2d2;"></div><div style="position:absolute;left:36px;top:81.20px;font-size:15px;line-height:15px;white-space:pre;transform:scaleX(0.93);transform-origin:0 0;">-1.6</div><div style="position:absolute;left:86px;top:81.20px;font-size:15px;line-height:15px;white-space:pre;transform:scaleX(0.93);transform-origin:0 0;">-1.5</div><div style="position:absolute;left:126px;top:81.20px;font-size:15px;line-height:15px;white-space:pre;transform:scaleX(0.93);transform-origin:0 0;">orange_50</div><div style="position:absolute;left:202px;top:80px;width:25px;height:25px;background:#805200;"></div><div style="position:absolute;left:1px;top:106px;width:29px;height:26px;background:#f0f0f0;"></div><div style="position:absolute;left:1px;top:106px;width:29px;height:1px;background:#fff;"></div><div style="position:absolute;left:1px;top:106px;width:1px;height:26px;background:#fff;"></div><div style="position:absolute;left:1px;top:132px;width:29px;height:1px;background:#8c8c8c;"></div><div style="position:absolute;left:1px;width:24px;text-align:right;top:111.10px;font-size:15px;line-height:15px;white-space:pre;transform:scaleX(0.93);transform-origin:100% 0;">16</div><div style="position:absolute;left:32px;top:106px;width:281px;height:26px;background:#fff;"></div><div style="position:absolute;left:32px;top:132px;width:281px;height:1px;background:#d2d2d2;"></div><div style="position:absolute;left:81px;top:106px;width:1px;height:27px;background:#d2d2d2;"></div><div style="position:absolute;left:121px;top:106px;width:1px;height:27px;background:#d2d2d2;"></div><div style="position:absolute;left:231px;top:106px;width:1px;height:27px;background:#d2d2d2;"></div><div style="position:absolute;left:36px;top:108.20px;font-size:15px;line-height:15px;white-space:pre;transform:scaleX(0.93);transform-origin:0 0;">-1.5</div><div style="position:absolute;left:86px;top:108.20px;font-size:15px;line-height:15px;white-space:pre;transform:scaleX(0.93);transform-origin:0 0;">-1.4</div><div style="position:absolute;left:126px;top:108.20px;font-size:15px;line-height:15px;white-space:pre;transform:scaleX(0.93);transform-origin:0 0;">orange_59</div><div style="position:absolute;left:202px;top:106px;width:25px;height:26px;background:#966100;"></div><div style="position:absolute;left:1px;top:133px;width:29px;height:25px;background:#f0f0f0;"></div><div style="position:absolute;left:1px;top:133px;width:29px;height:1px;background:#fff;"></div><div style="position:absolute;left:1px;top:133px;width:1px;height:25px;background:#fff;"></div><div style="position:absolute;left:1px;top:158px;width:29px;height:1px;background:#8c8c8c;"></div><div style="position:absolute;left:1px;width:24px;text-align:right;top:137.10px;font-size:15px;line-height:15px;white-space:pre;transform:scaleX(0.93);transform-origin:100% 0;">17</div><div style="position:absolute;left:32px;top:133px;width:281px;height:25px;background:#fff;"></div><div style="position:absolute;left:32px;top:158px;width:281px;height:1px;background:#d2d2d2;"></div><div style="position:absolute;left:81px;top:133px;width:1px;height:26px;background:#d2d2d2;"></div><div style="position:absolute;left:121px;top:133px;width:1px;height:26px;background:#d2d2d2;"></div><div style="position:absolute;left:231px;top:133px;width:1px;height:26px;background:#d2d2d2;"></div><div style="position:absolute;left:36px;top:134.20px;font-size:15px;line-height:15px;white-space:pre;transform:scaleX(0.93);transform-origin:0 0;">-1.4</div><div style="position:absolute;left:86px;top:134.20px;font-size:15px;line-height:15px;white-space:pre;transform:scaleX(0.93);transform-origin:0 0;">-1.3</div><div style="position:absolute;left:126px;top:134.20px;font-size:15px;line-height:15px;white-space:pre;transform:scaleX(0.93);transform-origin:0 0;">orange_68</div><div style="position:absolute;left:202px;top:133px;width:25px;height:25px;background:#ad7000;"></div><div style="position:absolute;left:1px;top:159px;width:29px;height:25px;background:#f0f0f0;"></div><div style="position:absolute;left:1px;top:159px;width:29px;height:1px;background:#fff;"></div><div style="position:absolute;left:1px;top:159px;width:1px;height:25px;background:#fff;"></div><div style="position:absolute;left:1px;top:184px;width:29px;height:1px;background:#8c8c8c;"></div><div style="position:absolute;left:1px;width:24px;text-align:right;top:163.10px;font-size:15px;line-height:15px;white-space:pre;transform:scaleX(0.93);transform-origin:100% 0;">18</div><div style="position:absolute;left:32px;top:159px;width:281px;height:25px;background:#fff;"></div><div style="position:absolute;left:32px;top:184px;width:281px;height:1px;background:#d2d2d2;"></div><div style="position:absolute;left:81px;top:159px;width:1px;height:26px;background:#d2d2d2;"></div><div style="position:absolute;left:121px;top:159px;width:1px;height:26px;background:#d2d2d2;"></div><div style="position:absolute;left:231px;top:159px;width:1px;height:26px;background:#d2d2d2;"></div><div style="position:absolute;left:36px;top:160.20px;font-size:15px;line-height:15px;white-space:pre;transform:scaleX(0.93);transform-origin:0 0;">-1.3</div><div style="position:absolute;left:86px;top:160.20px;font-size:15px;line-height:15px;white-space:pre;transform:scaleX(0.93);transform-origin:0 0;">-1.2</div><div style="position:absolute;left:126px;top:160.20px;font-size:15px;line-height:15px;white-space:pre;transform:scaleX(0.93);transform-origin:0 0;">orange_77</div><div style="position:absolute;left:202px;top:159px;width:25px;height:25px;background:#c47f00;"></div><div style="position:absolute;left:1px;top:185px;width:29px;height:25px;background:#f0f0f0;"></div><div style="position:absolute;left:1px;top:185px;width:29px;height:1px;background:#fff;"></div><div style="position:absolute;left:1px;top:185px;width:1px;height:25px;background:#fff;"></div><div style="position:absolute;left:1px;top:210px;width:29px;height:1px;background:#8c8c8c;"></div><div style="position:absolute;left:1px;width:24px;text-align:right;top:190.10px;font-size:15px;line-height:15px;white-space:pre;transform:scaleX(0.93);transform-origin:100% 0;">19</div><div style="position:absolute;left:32px;top:185px;width:281px;height:25px;background:#fff;"></div><div style="position:absolute;left:32px;top:210px;width:281px;height:1px;background:#d2d2d2;"></div><div style="position:absolute;left:81px;top:185px;width:1px;height:26px;background:#d2d2d2;"></div><div style="position:absolute;left:121px;top:185px;width:1px;height:26px;background:#d2d2d2;"></div><div style="position:absolute;left:231px;top:185px;width:1px;height:26px;background:#d2d2d2;"></div><div style="position:absolute;left:36px;top:187.20px;font-size:15px;line-height:15px;white-space:pre;transform:scaleX(0.93);transform-origin:0 0;">-1.2</div><div style="position:absolute;left:86px;top:187.20px;font-size:15px;line-height:15px;white-space:pre;transform:scaleX(0.93);transform-origin:0 0;">-1.1</div><div style="position:absolute;left:126px;top:187.20px;font-size:15px;line-height:15px;white-space:pre;transform:scaleX(0.93);transform-origin:0 0;">orange_86</div><div style="position:absolute;left:202px;top:185px;width:25px;height:25px;background:#db8e00;"></div><div style="position:absolute;left:1px;top:211px;width:29px;height:26px;background:#f0f0f0;"></div><div style="position:absolute;left:1px;top:211px;width:29px;height:1px;background:#fff;"></div><div style="position:absolute;left:1px;top:211px;width:1px;height:26px;background:#fff;"></div><div style="position:absolute;left:1px;top:237px;width:29px;height:1px;background:#8c8c8c;"></div><div style="position:absolute;left:1px;width:24px;text-align:right;top:216.10px;font-size:15px;line-height:15px;white-space:pre;transform:scaleX(0.93);transform-origin:100% 0;">20</div><div style="position:absolute;left:32px;top:211px;width:281px;height:26px;background:#fff;"></div><div style="position:absolute;left:32px;top:237px;width:281px;height:1px;background:#d2d2d2;"></div><div style="position:absolute;left:81px;top:211px;width:1px;height:27px;background:#d2d2d2;"></div><div style="position:absolute;left:121px;top:211px;width:1px;height:27px;background:#d2d2d2;"></div><div style="position:absolute;left:231px;top:211px;width:1px;height:27px;background:#d2d2d2;"></div><div style="position:absolute;left:36px;top:213.20px;font-size:15px;line-height:15px;white-space:pre;transform:scaleX(0.93);transform-origin:0 0;">-1.1</div><div style="position:absolute;left:86px;top:213.20px;font-size:15px;line-height:15px;white-space:pre;transform:scaleX(0.93);transform-origin:0 0;">-1.0</div><div style="position:absolute;left:126px;top:213.20px;font-size:15px;line-height:15px;white-space:pre;transform:scaleX(0.93);transform-origin:0 0;">orange_99</div><div style="position:absolute;left:202px;top:211px;width:25px;height:26px;background:#fca300;"></div><div style="position:absolute;left:1px;top:238px;width:29px;height:25px;background:#f0f0f0;"></div><div style="position:absolute;left:1px;top:238px;width:29px;height:1px;background:#fff;"></div><div style="position:absolute;left:1px;top:238px;width:1px;height:25px;background:#fff;"></div><div style="position:absolute;left:1px;top:263px;width:29px;height:1px;background:#8c8c8c;"></div><div style="position:absolute;left:1px;width:24px;text-align:right;top:242.10px;font-size:15px;line-height:15px;white-space:pre;transform:scaleX(0.93);transform-origin:100% 0;">21</div><div style="position:absolute;left:32px;top:238px;width:281px;height:25px;background:#fff;"></div><div style="position:absolute;left:32px;top:263px;width:281px;height:1px;background:#d2d2d2;"></div><div style="position:absolute;left:81px;top:238px;width:1px;height:26px;background:#d2d2d2;"></div><div style="position:absolute;left:121px;top:238px;width:1px;height:26px;background:#d2d2d2;"></div><div style="position:absolute;left:231px;top:238px;width:1px;height:26px;background:#d2d2d2;"></div><div style="position:absolute;left:36px;top:239.20px;font-size:15px;line-height:15px;white-space:pre;transform:scaleX(0.93);transform-origin:0 0;">-1.0</div><div style="position:absolute;left:86px;top:239.20px;font-size:15px;line-height:15px;white-space:pre;transform:scaleX(0.93);transform-origin:0 0;">-0.9</div><div style="position:absolute;left:126px;top:239.20px;font-size:15px;line-height:15px;white-space:pre;transform:scaleX(0.93);transform-origin:0 0;">red 088</div><div style="position:absolute;left:202px;top:238px;width:25px;height:25px;background:#580000;"></div><div style="position:absolute;left:1px;top:264px;width:29px;height:25px;background:#f0f0f0;"></div><div style="position:absolute;left:1px;top:264px;width:29px;height:1px;background:#fff;"></div><div style="position:absolute;left:1px;top:264px;width:1px;height:25px;background:#fff;"></div><div style="position:absolute;left:1px;top:289px;width:29px;height:1px;background:#8c8c8c;"></div><div style="position:absolute;left:1px;width:24px;text-align:right;top:268.10px;font-size:15px;line-height:15px;white-space:pre;transform:scaleX(0.93);transform-origin:100% 0;">22</div><div style="position:absolute;left:32px;top:264px;width:281px;height:25px;background:#fff;"></div><div style="position:absolute;left:32px;top:289px;width:281px;height:1px;background:#d2d2d2;"></div><div style="position:absolute;left:81px;top:264px;width:1px;height:26px;background:#d2d2d2;"></div><div style="position:absolute;left:121px;top:264px;width:1px;height:26px;background:#d2d2d2;"></div><div style="position:absolute;left:231px;top:264px;width:1px;height:26px;background:#d2d2d2;"></div><div style="position:absolute;left:36px;top:265.20px;font-size:15px;line-height:15px;white-space:pre;transform:scaleX(0.93);transform-origin:0 0;">-0.9</div><div style="position:absolute;left:86px;top:265.20px;font-size:15px;line-height:15px;white-space:pre;transform:scaleX(0.93);transform-origin:0 0;">-0.8</div><div style="position:absolute;left:126px;top:265.20px;font-size:15px;line-height:15px;white-space:pre;transform:scaleX(0.93);transform-origin:0 0;">red 104</div><div style="position:absolute;left:202px;top:264px;width:25px;height:25px;background:#680000;"></div><div style="position:absolute;left:1px;top:290px;width:29px;height:25px;background:#f0f0f0;"></div><div style="position:absolute;left:1px;top:290px;width:29px;height:1px;background:#fff;"></div><div style="position:absolute;left:1px;top:290px;width:1px;height:25px;background:#fff;"></div><div style="position:absolute;left:1px;top:315px;width:29px;height:1px;background:#8c8c8c;"></div><div style="position:absolute;left:1px;width:24px;text-align:right;top:294.10px;font-size:15px;line-height:15px;white-space:pre;transform:scaleX(0.93);transform-origin:100% 0;">23</div><div style="position:absolute;left:32px;top:290px;width:281px;height:25px;background:#fff;"></div><div style="position:absolute;left:32px;top:315px;width:281px;height:1px;background:#d2d2d2;"></div><div style="position:absolute;left:81px;top:290px;width:1px;height:26px;background:#d2d2d2;"></div><div style="position:absolute;left:121px;top:290px;width:1px;height:26px;background:#d2d2d2;"></div><div style="position:absolute;left:231px;top:290px;width:1px;height:26px;background:#d2d2d2;"></div><div style="position:absolute;left:36px;top:291.20px;font-size:15px;line-height:15px;white-space:pre;transform:scaleX(0.93);transform-origin:0 0;">-0.8</div><div style="position:absolute;left:86px;top:291.20px;font-size:15px;line-height:15px;white-space:pre;transform:scaleX(0.93);transform-origin:0 0;">-0.7</div><div style="position:absolute;left:126px;top:291.20px;font-size:15px;line-height:15px;white-space:pre;transform:scaleX(0.93);transform-origin:0 0;">red 120</div><div style="position:absolute;left:202px;top:290px;width:25px;height:25px;background:#780000;"></div><div style="position:absolute;left:1px;top:316px;width:29px;height:26px;background:#f0f0f0;"></div><div style="position:absolute;left:1px;top:316px;width:29px;height:1px;background:#fff;"></div><div style="position:absolute;left:1px;top:316px;width:1px;height:26px;background:#fff;"></div><div style="position:absolute;left:1px;top:342px;width:29px;height:1px;background:#8c8c8c;"></div><div style="position:absolute;left:1px;width:24px;text-align:right;top:321.10px;font-size:15px;line-height:15px;white-space:pre;transform:scaleX(0.93);transform-origin:100% 0;">24</div><div style="position:absolute;left:32px;top:316px;width:281px;height:26px;background:#fff;"></div><div style="position:absolute;left:32px;top:342px;width:281px;height:1px;background:#d2d2d2;"></div><div style="position:absolute;left:81px;top:316px;width:1px;height:27px;background:#d2d2d2;"></div><div style="position:absolute;left:121px;top:316px;width:1px;height:27px;background:#d2d2d2;"></div><div style="position:absolute;left:231px;top:316px;width:1px;height:27px;background:#d2d2d2;"></div><div style="position:absolute;left:36px;top:318.20px;font-size:15px;line-height:15px;white-space:pre;transform:scaleX(0.93);transform-origin:0 0;">-0.7</div><div style="position:absolute;left:86px;top:318.20px;font-size:15px;line-height:15px;white-space:pre;transform:scaleX(0.93);transform-origin:0 0;">-0.6</div><div style="position:absolute;left:126px;top:318.20px;font-size:15px;line-height:15px;white-space:pre;transform:scaleX(0.93);transform-origin:0 0;">red 136</div><div style="position:absolute;left:202px;top:316px;width:25px;height:26px;background:#880000;"></div><div style="position:absolute;left:1px;top:343px;width:29px;height:25px;background:#f0f0f0;"></div><div style="position:absolute;left:1px;top:343px;width:29px;height:1px;background:#fff;"></div><div style="position:absolute;left:1px;top:343px;width:1px;height:25px;background:#fff;"></div><div style="position:absolute;left:1px;top:368px;width:29px;height:1px;background:#8c8c8c;"></div><div style="position:absolute;left:1px;width:24px;text-align:right;top:347.10px;font-size:15px;line-height:15px;white-space:pre;transform:scaleX(0.93);transform-origin:100% 0;">25</div><div style="position:absolute;left:32px;top:343px;width:281px;height:25px;background:#fff;"></div><div style="position:absolute;left:32px;top:368px;width:281px;height:1px;background:#d2d2d2;"></div><div style="position:absolute;left:81px;top:343px;width:1px;height:26px;background:#d2d2d2;"></div><div style="position:absolute;left:121px;top:343px;width:1px;height:26px;background:#d2d2d2;"></div><div style="position:absolute;left:231px;top:343px;width:1px;height:26px;background:#d2d2d2;"></div><div style="position:absolute;left:36px;top:344.20px;font-size:15px;line-height:15px;white-space:pre;transform:scaleX(0.93);transform-origin:0 0;">-0.6</div><div style="position:absolute;left:86px;top:344.20px;font-size:15px;line-height:15px;white-space:pre;transform:scaleX(0.93);transform-origin:0 0;">-0.5</div><div style="position:absolute;left:126px;top:344.20px;font-size:15px;line-height:15px;white-space:pre;transform:scaleX(0.93);transform-origin:0 0;">red 152</div><div style="position:absolute;left:202px;top:343px;width:25px;height:25px;background:#980000;"></div><div style="position:absolute;left:1px;top:369px;width:29px;height:25px;background:#f0f0f0;"></div><div style="position:absolute;left:1px;top:369px;width:29px;height:1px;background:#fff;"></div><div style="position:absolute;left:1px;top:369px;width:1px;height:25px;background:#fff;"></div><div style="position:absolute;left:1px;top:394px;width:29px;height:1px;background:#8c8c8c;"></div><div style="position:absolute;left:1px;width:24px;text-align:right;top:373.10px;font-size:15px;line-height:15px;white-space:pre;transform:scaleX(0.93);transform-origin:100% 0;">26</div><div style="position:absolute;left:32px;top:369px;width:281px;height:25px;background:#fff;"></div><div style="position:absolute;left:32px;top:394px;width:281px;height:1px;background:#d2d2d2;"></div><div style="position:absolute;left:81px;top:369px;width:1px;height:26px;background:#d2d2d2;"></div><div style="position:absolute;left:121px;top:369px;width:1px;height:26px;background:#d2d2d2;"></div><div style="position:absolute;left:231px;top:369px;width:1px;height:26px;background:#d2d2d2;"></div><div style="position:absolute;left:36px;top:370.20px;font-size:15px;line-height:15px;white-space:pre;transform:scaleX(0.93);transform-origin:0 0;">-0.5</div><div style="position:absolute;left:86px;top:370.20px;font-size:15px;line-height:15px;white-space:pre;transform:scaleX(0.93);transform-origin:0 0;">-0.4</div><div style="position:absolute;left:126px;top:370.20px;font-size:15px;line-height:15px;white-space:pre;transform:scaleX(0.93);transform-origin:0 0;">red 168</div><div style="position:absolute;left:202px;top:369px;width:25px;height:25px;background:#a80000;"></div><div style="position:absolute;left:1px;top:395px;width:29px;height:25px;background:#f0f0f0;"></div><div style="position:absolute;left:1px;top:395px;width:29px;height:1px;background:#fff;"></div><div style="position:absolute;left:1px;top:395px;width:1px;height:25px;background:#fff;"></div><div style="position:absolute;left:1px;top:420px;width:29px;height:1px;background:#8c8c8c;"></div><div style="position:absolute;left:1px;width:24px;text-align:right;top:400.10px;font-size:15px;line-height:15px;white-space:pre;transform:scaleX(0.93);transform-origin:100% 0;">27</div><div style="position:absolute;left:32px;top:395px;width:281px;height:25px;background:#fff;"></div><div style="position:absolute;left:32px;top:420px;width:281px;height:1px;background:#d2d2d2;"></div><div style="position:absolute;left:81px;top:395px;width:1px;height:26px;background:#d2d2d2;"></div><div style="position:absolute;left:121px;top:395px;width:1px;height:26px;background:#d2d2d2;"></div><div style="position:absolute;left:231px;top:395px;width:1px;height:26px;background:#d2d2d2;"></div><div style="position:absolute;left:36px;top:397.20px;font-size:15px;line-height:15px;white-space:pre;transform:scaleX(0.93);transform-origin:0 0;">-0.4</div><div style="position:absolute;left:86px;top:397.20px;font-size:15px;line-height:15px;white-space:pre;transform:scaleX(0.93);transform-origin:0 0;">-0.3</div><div style="position:absolute;left:126px;top:397.20px;font-size:15px;line-height:15px;white-space:pre;transform:scaleX(0.93);transform-origin:0 0;">red 184</div><div style="position:absolute;left:202px;top:395px;width:25px;height:25px;background:#b80000;"></div><div style="position:absolute;left:1px;top:421px;width:29px;height:26px;background:#f0f0f0;"></div><div style="position:absolute;left:1px;top:421px;width:29px;height:1px;background:#fff;"></div><div style="position:absolute;left:1px;top:421px;width:1px;height:26px;background:#fff;"></div><div style="position:absolute;left:1px;top:447px;width:29px;height:1px;background:#8c8c8c;"></div><div style="position:absolute;left:1px;width:24px;text-align:right;top:426.10px;font-size:15px;line-height:15px;white-space:pre;transform:scaleX(0.93);transform-origin:100% 0;">28</div><div style="position:absolute;left:32px;top:421px;width:281px;height:26px;background:#fff;"></div><div style="position:absolute;left:32px;top:447px;width:281px;height:1px;background:#d2d2d2;"></div><div style="position:absolute;left:81px;top:421px;width:1px;height:27px;background:#d2d2d2;"></div><div style="position:absolute;left:121px;top:421px;width:1px;height:27px;background:#d2d2d2;"></div><div style="position:absolute;left:231px;top:421px;width:1px;height:27px;background:#d2d2d2;"></div><div style="position:absolute;left:36px;top:423.20px;font-size:15px;line-height:15px;white-space:pre;transform:scaleX(0.93);transform-origin:0 0;">-0.3</div><div style="position:absolute;left:86px;top:423.20px;font-size:15px;line-height:15px;white-space:pre;transform:scaleX(0.93);transform-origin:0 0;">-0.2</div><div style="position:absolute;left:126px;top:423.20px;font-size:15px;line-height:15px;white-space:pre;transform:scaleX(0.93);transform-origin:0 0;">red 200</div><div style="position:absolute;left:202px;top:421px;width:25px;height:26px;background:#c80000;"></div><div style="position:absolute;left:1px;top:448px;width:29px;height:25px;background:#f0f0f0;"></div><div style="position:absolute;left:1px;top:448px;width:29px;height:1px;background:#fff;"></div><div style="position:absolute;left:1px;top:448px;width:1px;height:25px;background:#fff;"></div><div style="position:absolute;left:1px;top:473px;width:29px;height:1px;background:#8c8c8c;"></div><div style="position:absolute;left:1px;width:24px;text-align:right;top:452.10px;font-size:15px;line-height:15px;white-space:pre;transform:scaleX(0.93);transform-origin:100% 0;">29</div><div style="position:absolute;left:32px;top:448px;width:281px;height:25px;background:#fff;"></div><div style="position:absolute;left:32px;top:473px;width:281px;height:1px;background:#d2d2d2;"></div><div style="position:absolute;left:81px;top:448px;width:1px;height:26px;background:#d2d2d2;"></div><div style="position:absolute;left:121px;top:448px;width:1px;height:26px;background:#d2d2d2;"></div><div style="position:absolute;left:231px;top:448px;width:1px;height:26px;background:#d2d2d2;"></div><div style="position:absolute;left:36px;top:449.20px;font-size:15px;line-height:15px;white-space:pre;transform:scaleX(0.93);transform-origin:0 0;">-0.2</div><div style="position:absolute;left:86px;top:449.20px;font-size:15px;line-height:15px;white-space:pre;transform:scaleX(0.93);transform-origin:0 0;">-0.1</div><div style="position:absolute;left:126px;top:449.20px;font-size:15px;line-height:15px;white-space:pre;transform:scaleX(0.93);transform-origin:0 0;">red 216</div><div style="position:absolute;left:202px;top:448px;width:25px;height:25px;background:#d80000;"></div><div style="position:absolute;left:1px;top:474px;width:29px;height:25px;background:#f0f0f0;"></div><div style="position:absolute;left:1px;top:474px;width:29px;height:1px;background:#fff;"></div><div style="position:absolute;left:1px;top:474px;width:1px;height:25px;background:#fff;"></div><div style="position:absolute;left:1px;top:499px;width:29px;height:1px;background:#8c8c8c;"></div><div style="position:absolute;left:1px;width:24px;text-align:right;top:478.10px;font-size:15px;line-height:15px;white-space:pre;transform:scaleX(0.93);transform-origin:100% 0;">30</div><div style="position:absolute;left:32px;top:474px;width:281px;height:25px;background:#fff;"></div><div style="position:absolute;left:32px;top:499px;width:281px;height:1px;background:#d2d2d2;"></div><div style="position:absolute;left:81px;top:474px;width:1px;height:26px;background:#d2d2d2;"></div><div style="position:absolute;left:121px;top:474px;width:1px;height:26px;background:#d2d2d2;"></div><div style="position:absolute;left:231px;top:474px;width:1px;height:26px;background:#d2d2d2;"></div><div style="position:absolute;left:36px;top:475.20px;font-size:15px;line-height:15px;white-space:pre;transform:scaleX(0.93);transform-origin:0 0;">-0.1</div><div style="position:absolute;left:86px;top:475.20px;font-size:15px;line-height:15px;white-space:pre;transform:scaleX(0.93);transform-origin:0 0;">0.0</div><div style="position:absolute;left:126px;top:475.20px;font-size:15px;line-height:15px;white-space:pre;transform:scaleX(0.93);transform-origin:0 0;">red 248</div><div style="position:absolute;left:202px;top:474px;width:25px;height:25px;background:#f80000;"></div><div style="position:absolute;left:1px;top:500px;width:29px;height:25px;background:#f0f0f0;"></div><div style="position:absolute;left:1px;top:500px;width:29px;height:1px;background:#fff;"></div><div style="position:absolute;left:1px;top:500px;width:1px;height:25px;background:#fff;"></div><div style="position:absolute;left:1px;top:525px;width:29px;height:1px;background:#8c8c8c;"></div><div style="position:absolute;left:1px;width:24px;text-align:right;top:504.10px;font-size:15px;line-height:15px;white-space:pre;transform:scaleX(0.93);transform-origin:100% 0;">31</div><div style="position:absolute;left:32px;top:500px;width:281px;height:25px;background:#fff;"></div><div style="position:absolute;left:32px;top:525px;width:281px;height:1px;background:#d2d2d2;"></div><div style="position:absolute;left:81px;top:500px;width:1px;height:26px;background:#d2d2d2;"></div><div style="position:absolute;left:121px;top:500px;width:1px;height:26px;background:#d2d2d2;"></div><div style="position:absolute;left:231px;top:500px;width:1px;height:26px;background:#d2d2d2;"></div><div style="position:absolute;left:36px;top:501.20px;font-size:15px;line-height:15px;white-space:pre;transform:scaleX(0.93);transform-origin:0 0;">0.0</div><div style="position:absolute;left:86px;top:501.20px;font-size:15px;line-height:15px;white-space:pre;transform:scaleX(0.93);transform-origin:0 0;">0.1</div><div style="position:absolute;left:126px;top:501.20px;font-size:15px;line-height:15px;white-space:pre;transform:scaleX(0.93);transform-origin:0 0;">green 248</div><div style="position:absolute;left:202px;top:500px;width:25px;height:25px;background:#00f800;"></div><div style="position:absolute;left:1px;top:526px;width:29px;height:26px;background:#f0f0f0;"></div><div style="position:absolute;left:1px;top:526px;width:29px;height:1px;background:#fff;"></div><div style="position:absolute;left:1px;top:526px;width:1px;height:26px;background:#fff;"></div><div style="position:absolute;left:1px;top:552px;width:29px;height:1px;background:#8c8c8c;"></div><div style="position:absolute;left:1px;width:24px;text-align:right;top:531.10px;font-size:15px;line-height:15px;white-space:pre;transform:scaleX(0.93);transform-origin:100% 0;">32</div><div style="position:absolute;left:32px;top:526px;width:281px;height:26px;background:#fff;"></div><div style="position:absolute;left:32px;top:552px;width:281px;height:1px;background:#d2d2d2;"></div><div style="position:absolute;left:81px;top:526px;width:1px;height:27px;background:#d2d2d2;"></div><div style="position:absolute;left:121px;top:526px;width:1px;height:27px;background:#d2d2d2;"></div><div style="position:absolute;left:231px;top:526px;width:1px;height:27px;background:#d2d2d2;"></div><div style="position:absolute;left:36px;top:528.20px;font-size:15px;line-height:15px;white-space:pre;transform:scaleX(0.93);transform-origin:0 0;">0.1</div><div style="position:absolute;left:86px;top:528.20px;font-size:15px;line-height:15px;white-space:pre;transform:scaleX(0.93);transform-origin:0 0;">0.2</div><div style="position:absolute;left:126px;top:528.20px;font-size:15px;line-height:15px;white-space:pre;transform:scaleX(0.93);transform-origin:0 0;">green 216</div><div style="position:absolute;left:202px;top:526px;width:25px;height:26px;background:#00d800;"></div><div style="position:absolute;left:1px;top:553px;width:29px;height:25px;background:#f0f0f0;"></div><div style="position:absolute;left:1px;top:553px;width:29px;height:1px;background:#fff;"></div><div style="position:absolute;left:1px;top:553px;width:1px;height:25px;background:#fff;"></div><div style="position:absolute;left:1px;top:578px;width:29px;height:1px;background:#8c8c8c;"></div><div style="position:absolute;left:1px;width:24px;text-align:right;top:557.10px;font-size:15px;line-height:15px;white-space:pre;transform:scaleX(0.93);transform-origin:100% 0;">33</div><div style="position:absolute;left:32px;top:553px;width:281px;height:25px;background:#fff;"></div><div style="position:absolute;left:32px;top:578px;width:281px;height:1px;background:#d2d2d2;"></div><div style="position:absolute;left:81px;top:553px;width:1px;height:26px;background:#d2d2d2;"></div><div style="position:absolute;left:121px;top:553px;width:1px;height:26px;background:#d2d2d2;"></div><div style="position:absolute;left:231px;top:553px;width:1px;height:26px;background:#d2d2d2;"></div><div style="position:absolute;left:36px;top:554.20px;font-size:15px;line-height:15px;white-space:pre;transform:scaleX(0.93);transform-origin:0 0;">0.2</div><div style="position:absolute;left:86px;top:554.20px;font-size:15px;line-height:15px;white-space:pre;transform:scaleX(0.93);transform-origin:0 0;">0.3</div><div style="position:absolute;left:126px;top:554.20px;font-size:15px;line-height:15px;white-space:pre;transform:scaleX(0.93);transform-origin:0 0;">green 200</div><div style="position:absolute;left:202px;top:553px;width:25px;height:25px;background:#00c800;"></div><div style="position:absolute;left:337px;top:0px;width:23px;height:575px;background:#f0f0f0;"></div><div style="position:absolute;left:359px;top:0px;width:1px;height:575px;background:#fff;"></div><svg style="position:absolute;left:343px;top:9px" width="11" height="8" viewBox="0 0 11 8"><path d="M1.2 6.5 L5.5 2 L9.8 6.5" stroke="#505050" stroke-width="2.3" fill="none"/></svg><svg style="position:absolute;left:343px;top:557px" width="11" height="8" viewBox="0 0 11 8"><path d="M1.2 1.5 L5.5 6 L9.8 1.5" stroke="#505050" stroke-width="2.3" fill="none"/></svg><div style="position:absolute;left:338px;top:126px;width:19px;height:229px;background:#cdcdcd;"></div><div style="position:absolute;left:0px;top:574px;width:364px;height:1px;background:#fff;"></div>
</div>
<div style="position:absolute;left:58px;top:844px;width:360px;height:23px;background:#f0f0f0;box-sizing:border-box;border-top:2px solid #6a6a6a;border-left:2px solid #6a6a6a;border-bottom:1px solid #fff;border-right:1px solid #fff;"></div>
<div style="position:absolute;left:65px;top:847.80px;font-size:15px;line-height:15px;color:#000;white-space:pre;transform:scaleX(0.93);transform-origin:0 0;">ok</div>
<div style="position:absolute;left:125px;top:874px;width:47px;height:26px;background:#f0f0f0;box-sizing:border-box;border-top:1px solid #fff;border-left:1px solid #fff;border-bottom:2px solid #6a6a6a;border-right:2px solid #6a6a6a;"></div>
<div style="position:absolute;left:-52px;width:400px;text-align:center;top:878.10px;font-size:15px;line-height:15px;color:#000;white-space:pre;transform:scaleX(0.93);transform-origin:50% 0;">Finish</div>
<div style="position:absolute;left:304px;top:874px;width:47px;height:26px;background:#f0f0f0;box-sizing:border-box;border-top:1px solid #fff;border-left:1px solid #fff;border-bottom:2px solid #6a6a6a;border-right:2px solid #6a6a6a;"></div>
<div style="position:absolute;left:127px;width:400px;text-align:center;top:878.10px;font-size:15px;line-height:15px;color:#000;white-space:pre;transform:scaleX(0.93);transform-origin:50% 0;">Help</div>
<svg style="position:absolute;left:407px;top:905px;" width="14" height="14" viewBox="0 0 14 14"><path d="M13 2 L2 13 M13 6 L6 13 M13 10 L10 13" stroke="#a0a0a0" stroke-width="1"/><path d="M13 3 L3 13 M13 7 L7 13 M13 11 L11 13" stroke="#fff" stroke-width="1"/></svg>
<div style="position:absolute;left:964px;top:150px;width:10px;height:762px;background:linear-gradient(to right,#7a7a7a,#a8a8a8 30%,#b9b9b9);"></div>
<div style="position:absolute;left:575px;top:150px;width:15px;height:762px;background:linear-gradient(to right,#b9b9b9,#a9a9a9 85%,#808080);"></div>
<div style="position:absolute;left:590px;top:150px;width:374px;height:769px;background:#f0f0f0;"></div>
<div style="position:absolute;left:590px;top:189px;width:1px;height:730px;background:#7a7a7a;"></div>
<div style="position:absolute;left:591px;top:189px;width:1px;height:730px;background:#fff;"></div>
<div style="position:absolute;left:590px;top:150px;width:374px;height:39px;background:#797271;"></div>
<svg style="position:absolute;left:603px;top:159px;" width="18" height="21" viewBox="0 0 18 21"><defs><linearGradient id="cg" x1="0" y1="0" x2="1" y2="1"><stop offset="0" stop-color="#8ab89a"/><stop offset="1" stop-color="#3a6a4a"/></linearGradient></defs><path d="M0 5.1 L8.4 0.3 L15.9 4.5 L8 9Z" fill="url(#cg)"/><path d="M8 9 L15.9 4.5 L15.9 15.9 L8 19.3Z" fill="#2f5a3e"/><path d="M0 5.1 L8 9 L8 19.3 L0 15.9Z" fill="#fbfbfb"/><path d="M2 9.5 L3 9 V14.5 M4.5 10.5 Q6.2 9.3 6.4 11.5 Q6.3 13 4.5 15.2 L6.8 15.8" stroke="#e03040" stroke-width="1.2" fill="none"/><path d="M10 16 L14 10.5" stroke="#d8e8e0" stroke-width="1.5"/><circle cx="10.8" cy="14.5" r="1" fill="#1a1a1a"/></svg>
<div style="position:absolute;left:627px;top:161.50px;font-size:15px;line-height:15px;color:#fff;white-space:pre;transform:scaleX(0.97);transform-origin:0 0;">Depth Range File</div>
<div style="position:absolute;left:811px;top:169px;width:12px;height:1px;background:#fff;"></div>
<div style="position:absolute;left:869px;top:164px;width:12px;height:12px;box-sizing:border-box;border:1px solid #aaa;"></div>
<svg style="position:absolute;left:927px;top:163px;" width="14" height="14" viewBox="0 0 14 14"><path d="M1 1 L13 13 M13 1 L1 13" stroke="#fff" stroke-width="1.1"/></svg>
<div style="position:absolute;left:602px;top:209px;width:358px;height:47px;box-sizing:border-box;border:1px solid #a0a0a0;border-right-color:#a0a0a0;box-shadow:inset 1px 1px 0 #fff, 1px 1px 0 #fff;"></div>
<div style="position:absolute;left:617px;top:226.00px;font-size:15px;line-height:15px;color:#000;white-space:pre;transform:scaleX(0.93);transform-origin:0 0;">Range file</div>
<div style="position:absolute;left:691px;top:224px;width:139px;height:24px;background:#fff;box-sizing:border-box;border-top:2px solid #6a6a6a;border-left:2px solid #6a6a6a;border-bottom:1px solid #fff;border-right:1px solid #fff;"></div>
<div style="position:absolute;left:693px;top:226px;width:136px;height:21px;overflow:hidden;"><div style="position:absolute;left:6px;top:3.30px;font-size:15px;line-height:15px;white-space:pre;">C:\Program Files\1.</div></div>
<div style="position:absolute;left:832px;top:223px;width:27px;height:27px;background:#ebe9e0;box-sizing:border-box;border-top:1px solid #fff;border-left:1px solid #fff;border-bottom:2px solid #6a6a6a;border-right:2px solid #6a6a6a;"></div>
<svg style="position:absolute;left:835px;top:227px;" width="20" height="20" viewBox="0 0 20 20"><defs><linearGradient id="fg" x1="0" y1="0" x2="0" y2="1"><stop offset="0" stop-color="#fff8b0"/><stop offset="1" stop-color="#f0c030"/></linearGradient></defs><path d="M1.5 3 Q1.5 1 3.5 1 L7.5 1 L9 3 L15.5 3 Q17 3 17 5 L17 14.5 Q17 16 15 16 L3.5 16 Q1.5 16 1.5 14Z" fill="#f0c840" stroke="#c89010" stroke-width="1.2"/><path d="M3 7 L17.5 7 Q18.5 7 18 9 L16.5 15.5 L3 15.5Z" fill="url(#fg)" stroke="#c89010" stroke-width="1"/></svg>
<div style="position:absolute;left:861px;top:223px;width:40px;height:27px;box-sizing:border-box;background:#f0f0f0;border:2px solid #6a6a6a;box-shadow:inset 1px 1px 0 #fff;"></div>
<div style="position:absolute;left:681px;width:400px;text-align:center;top:228.80px;font-size:15px;line-height:15px;color:#000;white-space:pre;transform:scaleX(0.93);transform-origin:50% 0;">Read</div>
<div style="position:absolute;left:903px;top:223px;width:42px;height:27px;background:#f0f0f0;box-sizing:border-box;border-top:1px solid #fff;border-left:1px solid #fff;border-bottom:2px solid #6a6a6a;border-right:2px solid #6a6a6a;"></div>
<div style="position:absolute;left:724px;width:400px;text-align:center;top:228.80px;font-size:15px;line-height:15px;color:#000;white-space:pre;transform:scaleX(0.93);transform-origin:50% 0;">Write</div>
<div style="position:absolute;left:600px;top:263px;width:364px;height:577px;box-sizing:border-box;border-top:2px solid #6a6a6a;border-left:2px solid #6a6a6a;border-bottom:1px solid #6a6a6a;border-right:1px solid #6a6a6a;background:#a0a0a0;overflow:hidden;">
<div style="position:absolute;left:1px;top:1px;width:312px;height:25px;background:#f0f0f0;"></div><div style="position:absolute;left:1px;top:1px;width:312px;height:1px;background:#fff;"></div><div style="position:absolute;left:1px;top:1px;width:1px;height:25px;background:#fff;"></div><div style="position:absolute;left:1px;top:26px;width:312px;height:2px;background:#8c8c8c;"></div><div style="position:absolute;left:80px;top:1px;width:2px;height:27px;background:#8c8c8c;"></div><div style="position:absolute;left:82px;top:2px;width:1px;height:24px;background:#fff;"></div><div style="position:absolute;left:120px;top:1px;width:2px;height:27px;background:#8c8c8c;"></div><div style="position:absolute;left:122px;top:2px;width:1px;height:24px;background:#fff;"></div><div style="position:absolute;left:230px;top:1px;width:2px;height:27px;background:#8c8c8c;"></div><div style="position:absolute;left:232px;top:2px;width:1px;height:24px;background:#fff;"></div><div style="position:absolute;left:30px;top:1px;width:2px;height:574px;background:#8c8c8c;"></div><div style="position:absolute;left:32px;top:2px;width:1px;height:24px;background:#fff;"></div><div style="position:absolute;left:37px;top:5.30px;font-size:15px;line-height:15px;white-space:pre;transform:scaleX(0.93);transform-origin:0 0;">From</div><div style="position:absolute;left:87px;top:5.30px;font-size:15px;line-height:15px;white-space:pre;transform:scaleX(0.93);transform-origin:0 0;">To</div><div style="position:absolute;left:127px;top:5.30px;font-size:15px;line-height:15px;white-space:pre;transform:scaleX(0.93);transform-origin:0 0;">Colour</div><div style="position:absolute;left:237px;top:5.30px;font-size:15px;line-height:15px;white-space:pre;transform:scaleX(0.93);transform-origin:0 0;transform:scaleX(1.02);">Comment</div><div style="position:absolute;left:1px;top:28px;width:29px;height:25px;background:#f0f0f0;"></div><div style="position:absolute;left:1px;top:28px;width:29px;height:1px;background:#fff;"></div><div style="position:absolute;left:1px;top:28px;width:1px;height:25px;background:#fff;"></div><div style="position:absolute;left:1px;top:53px;width:29px;height:1px;background:#8c8c8c;"></div><div style="position:absolute;left:1px;width:24px;text-align:right;top:32.10px;font-size:15px;line-height:15px;white-space:pre;transform:scaleX(0.93);transform-origin:100% 0;">28</div><div style="position:absolute;left:32px;top:28px;width:281px;height:25px;background:#fff;"></div><div style="position:absolute;left:32px;top:53px;width:281px;height:1px;background:#d2d2d2;"></div><div style="position:absolute;left:81px;top:28px;width:1px;height:26px;background:#d2d2d2;"></div><div style="position:absolute;left:121px;top:28px;width:1px;height:26px;background:#d2d2d2;"></div><div style="position:absolute;left:231px;top:28px;width:1px;height:26px;background:#d2d2d2;"></div><div style="position:absolute;left:36px;top:29.20px;font-size:15px;line-height:15px;white-space:pre;transform:scaleX(0.93);transform-origin:0 0;">-0.3</div><div style="position:absolute;left:86px;top:29.20px;font-size:15px;line-height:15px;white-space:pre;transform:scaleX(0.93);transform-origin:0 0;">-0.2</div><div style="position:absolute;left:126px;top:29.20px;font-size:15px;line-height:15px;white-space:pre;transform:scaleX(0.93);transform-origin:0 0;">red 200</div><div style="position:absolute;left:202px;top:28px;width:25px;height:25px;background:#c80000;"></div><div style="position:absolute;left:1px;top:54px;width:29px;height:25px;background:#f0f0f0;"></div><div style="position:absolute;left:1px;top:54px;width:29px;height:1px;background:#fff;"></div><div style="position:absolute;left:1px;top:54px;width:1px;height:25px;background:#fff;"></div><div style="position:absolute;left:1px;top:79px;width:29px;height:1px;background:#8c8c8c;"></div><div style="position:absolute;left:1px;width:24px;text-align:right;top:58.10px;font-size:15px;line-height:15px;white-space:pre;transform:scaleX(0.93);transform-origin:100% 0;">29</div><div style="position:absolute;left:32px;top:54px;width:281px;height:25px;background:#fff;"></div><div style="position:absolute;left:32px;top:79px;width:281px;height:1px;background:#d2d2d2;"></div><div style="position:absolute;left:81px;top:54px;width:1px;height:26px;background:#d2d2d2;"></div><div style="position:absolute;left:121px;top:54px;width:1px;height:26px;background:#d2d2d2;"></div><div style="position:absolute;left:231px;top:54px;width:1px;height:26px;background:#d2d2d2;"></div><div style="position:absolute;left:36px;top:55.20px;font-size:15px;line-height:15px;white-space:pre;transform:scaleX(0.93);transform-origin:0 0;">-0.2</div><div style="position:absolute;left:86px;top:55.20px;font-size:15px;line-height:15px;white-space:pre;transform:scaleX(0.93);transform-origin:0 0;">-0.1</div><div style="position:absolute;left:126px;top:55.20px;font-size:15px;line-height:15px;white-space:pre;transform:scaleX(0.93);transform-origin:0 0;">red 216</div><div style="position:absolute;left:202px;top:54px;width:25px;height:25px;background:#d80000;"></div><div style="position:absolute;left:1px;top:80px;width:29px;height:25px;background:#f0f0f0;"></div><div style="position:absolute;left:1px;top:80px;width:29px;height:1px;background:#fff;"></div><div style="position:absolute;left:1px;top:80px;width:1px;height:25px;background:#fff;"></div><div style="position:absolute;left:1px;top:105px;width:29px;height:1px;background:#8c8c8c;"></div><div style="position:absolute;left:1px;width:24px;text-align:right;top:84.10px;font-size:15px;line-height:15px;white-space:pre;transform:scaleX(0.93);transform-origin:100% 0;">30</div><div style="position:absolute;left:32px;top:80px;width:281px;height:25px;background:#fff;"></div><div style="position:absolute;left:32px;top:105px;width:281px;height:1px;background:#d2d2d2;"></div><div style="position:absolute;left:81px;top:80px;width:1px;height:26px;background:#d2d2d2;"></div><div style="position:absolute;left:121px;top:80px;width:1px;height:26px;background:#d2d2d2;"></div><div style="position:absolute;left:231px;top:80px;width:1px;height:26px;background:#d2d2d2;"></div><div style="position:absolute;left:36px;top:81.20px;font-size:15px;line-height:15px;white-space:pre;transform:scaleX(0.93);transform-origin:0 0;">-0.1</div><div style="position:absolute;left:86px;top:81.20px;font-size:15px;line-height:15px;white-space:pre;transform:scaleX(0.93);transform-origin:0 0;">0.0</div><div style="position:absolute;left:126px;top:81.20px;font-size:15px;line-height:15px;white-space:pre;transform:scaleX(0.93);transform-origin:0 0;">red 248</div><div style="position:absolute;left:202px;top:80px;width:25px;height:25px;background:#f80000;"></div><div style="position:absolute;left:1px;top:106px;width:29px;height:26px;background:#f0f0f0;"></div><div style="position:absolute;left:1px;top:106px;width:29px;height:1px;background:#fff;"></div><div style="position:absolute;left:1px;top:106px;width:1px;height:26px;background:#fff;"></div><div style="position:absolute;left:1px;top:132px;width:29px;height:1px;background:#8c8c8c;"></div><div style="position:absolute;left:1px;width:24px;text-align:right;top:111.10px;font-size:15px;line-height:15px;white-space:pre;transform:scaleX(0.93);transform-origin:100% 0;">31</div><div style="position:absolute;left:32px;top:106px;width:281px;height:26px;background:#fff;"></div><div style="position:absolute;left:32px;top:132px;width:281px;height:1px;background:#d2d2d2;"></div><div style="position:absolute;left:81px;top:106px;width:1px;height:27px;background:#d2d2d2;"></div><div style="position:absolute;left:121px;top:106px;width:1px;height:27px;background:#d2d2d2;"></div><div style="position:absolute;left:231px;top:106px;width:1px;height:27px;background:#d2d2d2;"></div><div style="position:absolute;left:36px;top:108.20px;font-size:15px;line-height:15px;white-space:pre;transform:scaleX(0.93);transform-origin:0 0;">0.0</div><div style="position:absolute;left:86px;top:108.20px;font-size:15px;line-height:15px;white-space:pre;transform:scaleX(0.93);transform-origin:0 0;">0.1</div><div style="position:absolute;left:126px;top:108.20px;font-size:15px;line-height:15px;white-space:pre;transform:scaleX(0.93);transform-origin:0 0;">green 248</div><div style="position:absolute;left:202px;top:106px;width:25px;height:26px;background:#00f800;"></div><div style="position:absolute;left:1px;top:133px;width:29px;height:25px;background:#f0f0f0;"></div><div style="position:absolute;left:1px;top:133px;width:29px;height:1px;background:#fff;"></div><div style="position:absolute;left:1px;top:133px;width:1px;height:25px;background:#fff;"></div><div style="position:absolute;left:1px;top:158px;width:29px;height:1px;background:#8c8c8c;"></div><div style="position:absolute;left:1px;width:24px;text-align:right;top:137.10px;font-size:15px;line-height:15px;white-space:pre;transform:scaleX(0.93);transform-origin:100% 0;">32</div><div style="position:absolute;left:32px;top:133px;width:281px;height:25px;background:#fff;"></div><div style="position:absolute;left:32px;top:158px;width:281px;height:1px;background:#d2d2d2;"></div><div style="position:absolute;left:81px;top:133px;width:1px;height:26px;background:#d2d2d2;"></div><div style="position:absolute;left:121px;top:133px;width:1px;height:26px;background:#d2d2d2;"></div><div style="position:absolute;left:231px;top:133px;width:1px;height:26px;background:#d2d2d2;"></div><div style="position:absolute;left:36px;top:134.20px;font-size:15px;line-height:15px;white-space:pre;transform:scaleX(0.93);transform-origin:0 0;">0.1</div><div style="position:absolute;left:86px;top:134.20px;font-size:15px;line-height:15px;white-space:pre;transform:scaleX(0.93);transform-origin:0 0;">0.2</div><div style="position:absolute;left:126px;top:134.20px;font-size:15px;line-height:15px;white-space:pre;transform:scaleX(0.93);transform-origin:0 0;">green 216</div><div style="position:absolute;left:202px;top:133px;width:25px;height:25px;background:#00d800;"></div><div style="position:absolute;left:1px;top:159px;width:29px;height:25px;background:#f0f0f0;"></div><div style="position:absolute;left:1px;top:159px;width:29px;height:1px;background:#fff;"></div><div style="position:absolute;left:1px;top:159px;width:1px;height:25px;background:#fff;"></div><div style="position:absolute;left:1px;top:184px;width:29px;height:1px;background:#8c8c8c;"></div><div style="position:absolute;left:1px;width:24px;text-align:right;top:163.10px;font-size:15px;line-height:15px;white-space:pre;transform:scaleX(0.93);transform-origin:100% 0;">33</div><div style="position:absolute;left:32px;top:159px;width:281px;height:25px;background:#fff;"></div><div style="position:absolute;left:32px;top:184px;width:281px;height:1px;background:#d2d2d2;"></div><div style="position:absolute;left:81px;top:159px;width:1px;height:26px;background:#d2d2d2;"></div><div style="position:absolute;left:121px;top:159px;width:1px;height:26px;background:#d2d2d2;"></div><div style="position:absolute;left:231px;top:159px;width:1px;height:26px;background:#d2d2d2;"></div><div style="position:absolute;left:36px;top:160.20px;font-size:15px;line-height:15px;white-space:pre;transform:scaleX(0.93);transform-origin:0 0;">0.2</div><div style="position:absolute;left:86px;top:160.20px;font-size:15px;line-height:15px;white-space:pre;transform:scaleX(0.93);transform-origin:0 0;">0.3</div><div style="position:absolute;left:126px;top:160.20px;font-size:15px;line-height:15px;white-space:pre;transform:scaleX(0.93);transform-origin:0 0;">green 200</div><div style="position:absolute;left:202px;top:159px;width:25px;height:25px;background:#00c800;"></div><div style="position:absolute;left:1px;top:185px;width:29px;height:25px;background:#f0f0f0;"></div><div style="position:absolute;left:1px;top:185px;width:29px;height:1px;background:#fff;"></div><div style="position:absolute;left:1px;top:185px;width:1px;height:25px;background:#fff;"></div><div style="position:absolute;left:1px;top:210px;width:29px;height:1px;background:#8c8c8c;"></div><div style="position:absolute;left:1px;width:24px;text-align:right;top:190.10px;font-size:15px;line-height:15px;white-space:pre;transform:scaleX(0.93);transform-origin:100% 0;">34</div><div style="position:absolute;left:32px;top:185px;width:281px;height:25px;background:#fff;"></div><div style="position:absolute;left:32px;top:210px;width:281px;height:1px;background:#d2d2d2;"></div><div style="position:absolute;left:81px;top:185px;width:1px;height:26px;background:#d2d2d2;"></div><div style="position:absolute;left:121px;top:185px;width:1px;height:26px;background:#d2d2d2;"></div><div style="position:absolute;left:231px;top:185px;width:1px;height:26px;background:#d2d2d2;"></div><div style="position:absolute;left:36px;top:187.20px;font-size:15px;line-height:15px;white-space:pre;transform:scaleX(0.93);transform-origin:0 0;">0.3</div><div style="position:absolute;left:86px;top:187.20px;font-size:15px;line-height:15px;white-space:pre;transform:scaleX(0.93);transform-origin:0 0;">0.4</div><div style="position:absolute;left:126px;top:187.20px;font-size:15px;line-height:15px;white-space:pre;transform:scaleX(0.93);transform-origin:0 0;">green 184</div><div style="position:absolute;left:202px;top:185px;width:25px;height:25px;background:#00b800;"></div><div style="position:absolute;left:1px;top:211px;width:29px;height:26px;background:#f0f0f0;"></div><div style="position:absolute;left:1px;top:211px;width:29px;height:1px;background:#fff;"></div><div style="position:absolute;left:1px;top:211px;width:1px;height:26px;background:#fff;"></div><div style="position:absolute;left:1px;top:237px;width:29px;height:1px;background:#8c8c8c;"></div><div style="position:absolute;left:1px;width:24px;text-align:right;top:216.10px;font-size:15px;line-height:15px;white-space:pre;transform:scaleX(0.93);transform-origin:100% 0;">35</div><div style="position:absolute;left:32px;top:211px;width:281px;height:26px;background:#fff;"></div><div style="position:absolute;left:32px;top:237px;width:281px;height:1px;background:#d2d2d2;"></div><div style="position:absolute;left:81px;top:211px;width:1px;height:27px;background:#d2d2d2;"></div><div style="position:absolute;left:121px;top:211px;width:1px;height:27px;background:#d2d2d2;"></div><div style="position:absolute;left:231px;top:211px;width:1px;height:27px;background:#d2d2d2;"></div><div style="position:absolute;left:36px;top:213.20px;font-size:15px;line-height:15px;white-space:pre;transform:scaleX(0.93);transform-origin:0 0;">0.4</div><div style="position:absolute;left:86px;top:213.20px;font-size:15px;line-height:15px;white-space:pre;transform:scaleX(0.93);transform-origin:0 0;">0.5</div><div style="position:absolute;left:126px;top:213.20px;font-size:15px;line-height:15px;white-space:pre;transform:scaleX(0.93);transform-origin:0 0;">green 168</div><div style="position:absolute;left:202px;top:211px;width:25px;height:26px;background:#00a800;"></div><div style="position:absolute;left:1px;top:238px;width:29px;height:25px;background:#f0f0f0;"></div><div style="position:absolute;left:1px;top:238px;width:29px;height:1px;background:#fff;"></div><div style="position:absolute;left:1px;top:238px;width:1px;height:25px;background:#fff;"></div><div style="position:absolute;left:1px;top:263px;width:29px;height:1px;background:#8c8c8c;"></div><div style="position:absolute;left:1px;width:24px;text-align:right;top:242.10px;font-size:15px;line-height:15px;white-space:pre;transform:scaleX(0.93);transform-origin:100% 0;">36</div><div style="position:absolute;left:32px;top:238px;width:281px;height:25px;background:#fff;"></div><div style="position:absolute;left:32px;top:263px;width:281px;height:1px;background:#d2d2d2;"></div><div style="position:absolute;left:81px;top:238px;width:1px;height:26px;background:#d2d2d2;"></div><div style="position:absolute;left:121px;top:238px;width:1px;height:26px;background:#d2d2d2;"></div><div style="position:absolute;left:231px;top:238px;width:1px;height:26px;background:#d2d2d2;"></div><div style="position:absolute;left:36px;top:239.20px;font-size:15px;line-height:15px;white-space:pre;transform:scaleX(0.93);transform-origin:0 0;">0.5</div><div style="position:absolute;left:86px;top:239.20px;font-size:15px;line-height:15px;white-space:pre;transform:scaleX(0.93);transform-origin:0 0;">0.6</div><div style="position:absolute;left:126px;top:239.20px;font-size:15px;line-height:15px;white-space:pre;transform:scaleX(0.93);transform-origin:0 0;">green 152</div><div style="position:absolute;left:202px;top:238px;width:25px;height:25px;background:#009800;"></div><div style="position:absolute;left:1px;top:264px;width:29px;height:25px;background:#f0f0f0;"></div><div style="position:absolute;left:1px;top:264px;width:29px;height:1px;background:#fff;"></div><div style="position:absolute;left:1px;top:264px;width:1px;height:25px;background:#fff;"></div><div style="position:absolute;left:1px;top:289px;width:29px;height:1px;background:#8c8c8c;"></div><div style="position:absolute;left:1px;width:24px;text-align:right;top:268.10px;font-size:15px;line-height:15px;white-space:pre;transform:scaleX(0.93);transform-origin:100% 0;">37</div><div style="position:absolute;left:32px;top:264px;width:281px;height:25px;background:#fff;"></div><div style="position:absolute;left:32px;top:289px;width:281px;height:1px;background:#d2d2d2;"></div><div style="position:absolute;left:81px;top:264px;width:1px;height:26px;background:#d2d2d2;"></div><div style="position:absolute;left:121px;top:264px;width:1px;height:26px;background:#d2d2d2;"></div><div style="position:absolute;left:231px;top:264px;width:1px;height:26px;background:#d2d2d2;"></div><div style="position:absolute;left:36px;top:265.20px;font-size:15px;line-height:15px;white-space:pre;transform:scaleX(0.93);transform-origin:0 0;">0.6</div><div style="position:absolute;left:86px;top:265.20px;font-size:15px;line-height:15px;white-space:pre;transform:scaleX(0.93);transform-origin:0 0;">0.7</div><div style="position:absolute;left:126px;top:265.20px;font-size:15px;line-height:15px;white-space:pre;transform:scaleX(0.93);transform-origin:0 0;">green 136</div><div style="position:absolute;left:202px;top:264px;width:25px;height:25px;background:#008800;"></div><div style="position:absolute;left:1px;top:290px;width:29px;height:25px;background:#f0f0f0;"></div><div style="position:absolute;left:1px;top:290px;width:29px;height:1px;background:#fff;"></div><div style="position:absolute;left:1px;top:290px;width:1px;height:25px;background:#fff;"></div><div style="position:absolute;left:1px;top:315px;width:29px;height:1px;background:#8c8c8c;"></div><div style="position:absolute;left:1px;width:24px;text-align:right;top:294.10px;font-size:15px;line-height:15px;white-space:pre;transform:scaleX(0.93);transform-origin:100% 0;">38</div><div style="position:absolute;left:32px;top:290px;width:281px;height:25px;background:#fff;"></div><div style="position:absolute;left:32px;top:315px;width:281px;height:1px;background:#d2d2d2;"></div><div style="position:absolute;left:81px;top:290px;width:1px;height:26px;background:#d2d2d2;"></div><div style="position:absolute;left:121px;top:290px;width:1px;height:26px;background:#d2d2d2;"></div><div style="position:absolute;left:231px;top:290px;width:1px;height:26px;background:#d2d2d2;"></div><div style="position:absolute;left:36px;top:291.20px;font-size:15px;line-height:15px;white-space:pre;transform:scaleX(0.93);transform-origin:0 0;">0.7</div><div style="position:absolute;left:86px;top:291.20px;font-size:15px;line-height:15px;white-space:pre;transform:scaleX(0.93);transform-origin:0 0;">0.8</div><div style="position:absolute;left:126px;top:291.20px;font-size:15px;line-height:15px;white-space:pre;transform:scaleX(0.93);transform-origin:0 0;">green 120</div><div style="position:absolute;left:202px;top:290px;width:25px;height:25px;background:#007800;"></div><div style="position:absolute;left:1px;top:316px;width:29px;height:26px;background:#f0f0f0;"></div><div style="position:absolute;left:1px;top:316px;width:29px;height:1px;background:#fff;"></div><div style="position:absolute;left:1px;top:316px;width:1px;height:26px;background:#fff;"></div><div style="position:absolute;left:1px;top:342px;width:29px;height:1px;background:#8c8c8c;"></div><div style="position:absolute;left:1px;width:24px;text-align:right;top:321.10px;font-size:15px;line-height:15px;white-space:pre;transform:scaleX(0.93);transform-origin:100% 0;">39</div><div style="position:absolute;left:32px;top:316px;width:281px;height:26px;background:#fff;"></div><div style="position:absolute;left:32px;top:342px;width:281px;height:1px;background:#d2d2d2;"></div><div style="position:absolute;left:81px;top:316px;width:1px;height:27px;background:#d2d2d2;"></div><div style="position:absolute;left:121px;top:316px;width:1px;height:27px;background:#d2d2d2;"></div><div style="position:absolute;left:231px;top:316px;width:1px;height:27px;background:#d2d2d2;"></div><div style="position:absolute;left:36px;top:318.20px;font-size:15px;line-height:15px;white-space:pre;transform:scaleX(0.93);transform-origin:0 0;">0.8</div><div style="position:absolute;left:86px;top:318.20px;font-size:15px;line-height:15px;white-space:pre;transform:scaleX(0.93);transform-origin:0 0;">0.9</div><div style="position:absolute;left:126px;top:318.20px;font-size:15px;line-height:15px;white-space:pre;transform:scaleX(0.93);transform-origin:0 0;">green 104</div><div style="position:absolute;left:202px;top:316px;width:25px;height:26px;background:#006800;"></div><div style="position:absolute;left:1px;top:343px;width:29px;height:25px;background:#f0f0f0;"></div><div style="position:absolute;left:1px;top:343px;width:29px;height:1px;background:#fff;"></div><div style="position:absolute;left:1px;top:343px;width:1px;height:25px;background:#fff;"></div><div style="position:absolute;left:1px;top:368px;width:29px;height:1px;background:#8c8c8c;"></div><div style="position:absolute;left:1px;width:24px;text-align:right;top:347.10px;font-size:15px;line-height:15px;white-space:pre;transform:scaleX(0.93);transform-origin:100% 0;">40</div><div style="position:absolute;left:32px;top:343px;width:281px;height:25px;background:#fff;"></div><div style="position:absolute;left:32px;top:368px;width:281px;height:1px;background:#d2d2d2;"></div><div style="position:absolute;left:81px;top:343px;width:1px;height:26px;background:#d2d2d2;"></div><div style="position:absolute;left:121px;top:343px;width:1px;height:26px;background:#d2d2d2;"></div><div style="position:absolute;left:231px;top:343px;width:1px;height:26px;background:#d2d2d2;"></div><div style="position:absolute;left:36px;top:344.20px;font-size:15px;line-height:15px;white-space:pre;transform:scaleX(0.93);transform-origin:0 0;">0.9</div><div style="position:absolute;left:86px;top:344.20px;font-size:15px;line-height:15px;white-space:pre;transform:scaleX(0.93);transform-origin:0 0;">1.0</div><div style="position:absolute;left:126px;top:344.20px;font-size:15px;line-height:15px;white-space:pre;transform:scaleX(0.93);transform-origin:0 0;">green 088</div><div style="position:absolute;left:202px;top:343px;width:25px;height:25px;background:#005800;"></div><div style="position:absolute;left:1px;top:369px;width:29px;height:25px;background:#f0f0f0;"></div><div style="position:absolute;left:1px;top:369px;width:29px;height:1px;background:#fff;"></div><div style="position:absolute;left:1px;top:369px;width:1px;height:25px;background:#fff;"></div><div style="position:absolute;left:1px;top:394px;width:29px;height:1px;background:#8c8c8c;"></div><div style="position:absolute;left:1px;width:24px;text-align:right;top:373.10px;font-size:15px;line-height:15px;white-space:pre;transform:scaleX(0.93);transform-origin:100% 0;">41</div><div style="position:absolute;left:32px;top:369px;width:281px;height:25px;background:#fff;"></div><div style="position:absolute;left:32px;top:394px;width:281px;height:1px;background:#d2d2d2;"></div><div style="position:absolute;left:81px;top:369px;width:1px;height:26px;background:#d2d2d2;"></div><div style="position:absolute;left:121px;top:369px;width:1px;height:26px;background:#d2d2d2;"></div><div style="position:absolute;left:231px;top:369px;width:1px;height:26px;background:#d2d2d2;"></div><div style="position:absolute;left:36px;top:370.20px;font-size:15px;line-height:15px;white-space:pre;transform:scaleX(0.93);transform-origin:0 0;">1.0</div><div style="position:absolute;left:86px;top:370.20px;font-size:15px;line-height:15px;white-space:pre;transform:scaleX(0.93);transform-origin:0 0;">1.1</div><div style="position:absolute;left:126px;top:370.20px;font-size:15px;line-height:15px;white-space:pre;transform:scaleX(0.93);transform-origin:0 0;">blue 248</div><div style="position:absolute;left:202px;top:369px;width:25px;height:25px;background:#0000f8;"></div><div style="position:absolute;left:1px;top:395px;width:29px;height:25px;background:#f0f0f0;"></div><div style="position:absolute;left:1px;top:395px;width:29px;height:1px;background:#fff;"></div><div style="position:absolute;left:1px;top:395px;width:1px;height:25px;background:#fff;"></div><div style="position:absolute;left:1px;top:420px;width:29px;height:1px;background:#8c8c8c;"></div><div style="position:absolute;left:1px;width:24px;text-align:right;top:400.10px;font-size:15px;line-height:15px;white-space:pre;transform:scaleX(0.93);transform-origin:100% 0;">42</div><div style="position:absolute;left:32px;top:395px;width:281px;height:25px;background:#fff;"></div><div style="position:absolute;left:32px;top:420px;width:281px;height:1px;background:#d2d2d2;"></div><div style="position:absolute;left:81px;top:395px;width:1px;height:26px;background:#d2d2d2;"></div><div style="position:absolute;left:121px;top:395px;width:1px;height:26px;background:#d2d2d2;"></div><div style="position:absolute;left:231px;top:395px;width:1px;height:26px;background:#d2d2d2;"></div><div style="position:absolute;left:36px;top:397.20px;font-size:15px;line-height:15px;white-space:pre;transform:scaleX(0.93);transform-origin:0 0;">1.1</div><div style="position:absolute;left:86px;top:397.20px;font-size:15px;line-height:15px;white-space:pre;transform:scaleX(0.93);transform-origin:0 0;">1.2</div><div style="position:absolute;left:126px;top:397.20px;font-size:15px;line-height:15px;white-space:pre;transform:scaleX(0.93);transform-origin:0 0;">blue 216</div><div style="position:absolute;left:202px;top:395px;width:25px;height:25px;background:#0000d8;"></div><div style="position:absolute;left:1px;top:421px;width:29px;height:26px;background:#f0f0f0;"></div><div style="position:absolute;left:1px;top:421px;width:29px;height:1px;background:#fff;"></div><div style="position:absolute;left:1px;top:421px;width:1px;height:26px;background:#fff;"></div><div style="position:absolute;left:1px;top:447px;width:29px;height:1px;background:#8c8c8c;"></div><div style="position:absolute;left:1px;width:24px;text-align:right;top:426.10px;font-size:15px;line-height:15px;white-space:pre;transform:scaleX(0.93);transform-origin:100% 0;">43</div><div style="position:absolute;left:32px;top:421px;width:281px;height:26px;background:#fff;"></div><div style="position:absolute;left:32px;top:447px;width:281px;height:1px;background:#d2d2d2;"></div><div style="position:absolute;left:81px;top:421px;width:1px;height:27px;background:#d2d2d2;"></div><div style="position:absolute;left:121px;top:421px;width:1px;height:27px;background:#d2d2d2;"></div><div style="position:absolute;left:231px;top:421px;width:1px;height:27px;background:#d2d2d2;"></div><div style="position:absolute;left:36px;top:423.20px;font-size:15px;line-height:15px;white-space:pre;transform:scaleX(0.93);transform-origin:0 0;">1.2</div><div style="position:absolute;left:86px;top:423.20px;font-size:15px;line-height:15px;white-space:pre;transform:scaleX(0.93);transform-origin:0 0;">1.3</div><div style="position:absolute;left:126px;top:423.20px;font-size:15px;line-height:15px;white-space:pre;transform:scaleX(0.93);transform-origin:0 0;">blue 200</div><div style="position:absolute;left:202px;top:421px;width:25px;height:26px;background:#0000c8;"></div><div style="position:absolute;left:1px;top:448px;width:29px;height:25px;background:#f0f0f0;"></div><div style="position:absolute;left:1px;top:448px;width:29px;height:1px;background:#fff;"></div><div style="position:absolute;left:1px;top:448px;width:1px;height:25px;background:#fff;"></div><div style="position:absolute;left:1px;top:473px;width:29px;height:1px;background:#8c8c8c;"></div><div style="position:absolute;left:1px;width:24px;text-align:right;top:452.10px;font-size:15px;line-height:15px;white-space:pre;transform:scaleX(0.93);transform-origin:100% 0;">44</div><div style="position:absolute;left:32px;top:448px;width:281px;height:25px;background:#fff;"></div><div style="position:absolute;left:32px;top:473px;width:281px;height:1px;background:#d2d2d2;"></div><div style="position:absolute;left:81px;top:448px;width:1px;height:26px;background:#d2d2d2;"></div><div style="position:absolute;left:121px;top:448px;width:1px;height:26px;background:#d2d2d2;"></div><div style="position:absolute;left:231px;top:448px;width:1px;height:26px;background:#d2d2d2;"></div><div style="position:absolute;left:36px;top:449.20px;font-size:15px;line-height:15px;white-space:pre;transform:scaleX(0.93);transform-origin:0 0;">1.3</div><div style="position:absolute;left:86px;top:449.20px;font-size:15px;line-height:15px;white-space:pre;transform:scaleX(0.93);transform-origin:0 0;">1.4</div><div style="position:absolute;left:126px;top:449.20px;font-size:15px;line-height:15px;white-space:pre;transform:scaleX(0.93);transform-origin:0 0;">blue 184</div><div style="position:absolute;left:202px;top:448px;width:25px;height:25px;background:#0000b8;"></div><div style="position:absolute;left:1px;top:474px;width:29px;height:25px;background:#f0f0f0;"></div><div style="position:absolute;left:1px;top:474px;width:29px;height:1px;background:#fff;"></div><div style="position:absolute;left:1px;top:474px;width:1px;height:25px;background:#fff;"></div><div style="position:absolute;left:1px;top:499px;width:29px;height:1px;background:#8c8c8c;"></div><div style="position:absolute;left:1px;width:24px;text-align:right;top:478.10px;font-size:15px;line-height:15px;white-space:pre;transform:scaleX(0.93);transform-origin:100% 0;">45</div><div style="position:absolute;left:32px;top:474px;width:281px;height:25px;background:#fff;"></div><div style="position:absolute;left:32px;top:499px;width:281px;height:1px;background:#d2d2d2;"></div><div style="position:absolute;left:81px;top:474px;width:1px;height:26px;background:#d2d2d2;"></div><div style="position:absolute;left:121px;top:474px;width:1px;height:26px;background:#d2d2d2;"></div><div style="position:absolute;left:231px;top:474px;width:1px;height:26px;background:#d2d2d2;"></div><div style="position:absolute;left:36px;top:475.20px;font-size:15px;line-height:15px;white-space:pre;transform:scaleX(0.93);transform-origin:0 0;">1.4</div><div style="position:absolute;left:86px;top:475.20px;font-size:15px;line-height:15px;white-space:pre;transform:scaleX(0.93);transform-origin:0 0;">1.5</div><div style="position:absolute;left:126px;top:475.20px;font-size:15px;line-height:15px;white-space:pre;transform:scaleX(0.93);transform-origin:0 0;">blue 168</div><div style="position:absolute;left:202px;top:474px;width:25px;height:25px;background:#0000a8;"></div><div style="position:absolute;left:1px;top:500px;width:29px;height:25px;background:#f0f0f0;"></div><div style="position:absolute;left:1px;top:500px;width:29px;height:1px;background:#fff;"></div><div style="position:absolute;left:1px;top:500px;width:1px;height:25px;background:#fff;"></div><div style="position:absolute;left:1px;top:525px;width:29px;height:1px;background:#8c8c8c;"></div><div style="position:absolute;left:1px;width:24px;text-align:right;top:504.10px;font-size:15px;line-height:15px;white-space:pre;transform:scaleX(0.93);transform-origin:100% 0;">46</div><div style="position:absolute;left:32px;top:500px;width:281px;height:25px;background:#fff;"></div><div style="position:absolute;left:32px;top:525px;width:281px;height:1px;background:#d2d2d2;"></div><div style="position:absolute;left:81px;top:500px;width:1px;height:26px;background:#d2d2d2;"></div><div style="position:absolute;left:121px;top:500px;width:1px;height:26px;background:#d2d2d2;"></div><div style="position:absolute;left:231px;top:500px;width:1px;height:26px;background:#d2d2d2;"></div><div style="position:absolute;left:36px;top:501.20px;font-size:15px;line-height:15px;white-space:pre;transform:scaleX(0.93);transform-origin:0 0;">1.5</div><div style="position:absolute;left:86px;top:501.20px;font-size:15px;line-height:15px;white-space:pre;transform:scaleX(0.93);transform-origin:0 0;">1.6</div><div style="position:absolute;left:126px;top:501.20px;font-size:15px;line-height:15px;white-space:pre;transform:scaleX(0.93);transform-origin:0 0;">blue 152</div><div style="position:absolute;left:202px;top:500px;width:25px;height:25px;background:#000098;"></div><div style="position:absolute;left:1px;top:526px;width:29px;height:26px;background:#f0f0f0;"></div><div style="position:absolute;left:1px;top:526px;width:29px;height:1px;background:#fff;"></div><div style="position:absolute;left:1px;top:526px;width:1px;height:26px;background:#fff;"></div><div style="position:absolute;left:1px;top:552px;width:29px;height:1px;background:#8c8c8c;"></div><div style="position:absolute;left:1px;width:24px;text-align:right;top:531.10px;font-size:15px;line-height:15px;white-space:pre;transform:scaleX(0.93);transform-origin:100% 0;">47</div><div style="position:absolute;left:32px;top:526px;width:281px;height:26px;background:#fff;"></div><div style="position:absolute;left:32px;top:552px;width:281px;height:1px;background:#d2d2d2;"></div><div style="position:absolute;left:81px;top:526px;width:1px;height:27px;background:#d2d2d2;"></div><div style="position:absolute;left:121px;top:526px;width:1px;height:27px;background:#d2d2d2;"></div><div style="position:absolute;left:231px;top:526px;width:1px;height:27px;background:#d2d2d2;"></div><div style="position:absolute;left:36px;top:528.20px;font-size:15px;line-height:15px;white-space:pre;transform:scaleX(0.93);transform-origin:0 0;">1.6</div><div style="position:absolute;left:86px;top:528.20px;font-size:15px;line-height:15px;white-space:pre;transform:scaleX(0.93);transform-origin:0 0;">1.7</div><div style="position:absolute;left:126px;top:528.20px;font-size:15px;line-height:15px;white-space:pre;transform:scaleX(0.93);transform-origin:0 0;">blue 136</div><div style="position:absolute;left:202px;top:526px;width:25px;height:26px;background:#000088;"></div><div style="position:absolute;left:1px;top:553px;width:29px;height:25px;background:#f0f0f0;"></div><div style="position:absolute;left:1px;top:553px;width:29px;height:1px;background:#fff;"></div><div style="position:absolute;left:1px;top:553px;width:1px;height:25px;background:#fff;"></div><div style="position:absolute;left:1px;top:578px;width:29px;height:1px;background:#8c8c8c;"></div><div style="position:absolute;left:1px;width:24px;text-align:right;top:557.10px;font-size:15px;line-height:15px;white-space:pre;transform:scaleX(0.93);transform-origin:100% 0;">48</div><div style="position:absolute;left:32px;top:553px;width:281px;height:25px;background:#fff;"></div><div style="position:absolute;left:32px;top:578px;width:281px;height:1px;background:#d2d2d2;"></div><div style="position:absolute;left:81px;top:553px;width:1px;height:26px;background:#d2d2d2;"></div><div style="position:absolute;left:121px;top:553px;width:1px;height:26px;background:#d2d2d2;"></div><div style="position:absolute;left:231px;top:553px;width:1px;height:26px;background:#d2d2d2;"></div><div style="position:absolute;left:36px;top:554.20px;font-size:15px;line-height:15px;white-space:pre;transform:scaleX(0.93);transform-origin:0 0;">1.7</div><div style="position:absolute;left:86px;top:554.20px;font-size:15px;line-height:15px;white-space:pre;transform:scaleX(0.93);transform-origin:0 0;">1.8</div><div style="position:absolute;left:126px;top:554.20px;font-size:15px;line-height:15px;white-space:pre;transform:scaleX(0.93);transform-origin:0 0;">blue 120</div><div style="position:absolute;left:202px;top:553px;width:25px;height:25px;background:#000078;"></div><div style="position:absolute;left:337px;top:0px;width:23px;height:575px;background:#f0f0f0;"></div><div style="position:absolute;left:359px;top:0px;width:1px;height:575px;background:#fff;"></div><svg style="position:absolute;left:343px;top:9px" width="11" height="8" viewBox="0 0 11 8"><path d="M1.2 6.5 L5.5 2 L9.8 6.5" stroke="#505050" stroke-width="2.3" fill="none"/></svg><svg style="position:absolute;left:343px;top:557px" width="11" height="8" viewBox="0 0 11 8"><path d="M1.2 1.5 L5.5 6 L9.8 1.5" stroke="#505050" stroke-width="2.3" fill="none"/></svg><div style="position:absolute;left:338px;top:255px;width:19px;height:179px;background:#cdcdcd;"></div><div style="position:absolute;left:0px;top:574px;width:364px;height:1px;background:#fff;"></div>
</div>
<div style="position:absolute;left:601px;top:844px;width:360px;height:23px;background:#f0f0f0;box-sizing:border-box;border-top:2px solid #6a6a6a;border-left:2px solid #6a6a6a;border-bottom:1px solid #fff;border-right:1px solid #fff;"></div>
<div style="position:absolute;left:608px;top:847.80px;font-size:15px;line-height:15px;color:#000;white-space:pre;transform:scaleX(0.93);transform-origin:0 0;">ok</div>
<div style="position:absolute;left:668px;top:874px;width:47px;height:26px;background:#f0f0f0;box-sizing:border-box;border-top:1px solid #fff;border-left:1px solid #fff;border-bottom:2px solid #6a6a6a;border-right:2px solid #6a6a6a;"></div>
<div style="position:absolute;left:491px;width:400px;text-align:center;top:878.10px;font-size:15px;line-height:15px;color:#000;white-space:pre;transform:scaleX(0.93);transform-origin:50% 0;">Finish</div>
<div style="position:absolute;left:847px;top:874px;width:47px;height:26px;background:#f0f0f0;box-sizing:border-box;border-top:1px solid #fff;border-left:1px solid #fff;border-bottom:2px solid #6a6a6a;border-right:2px solid #6a6a6a;"></div>
<div style="position:absolute;left:670px;width:400px;text-align:center;top:878.10px;font-size:15px;line-height:15px;color:#000;white-space:pre;transform:scaleX(0.93);transform-origin:50% 0;">Help</div>
<svg style="position:absolute;left:950px;top:905px;" width="14" height="14" viewBox="0 0 14 14"><path d="M13 2 L2 13 M13 6 L6 13 M13 10 L10 13" stroke="#a0a0a0" stroke-width="1"/><path d="M13 3 L3 13 M13 7 L7 13 M13 11 L11 13" stroke="#fff" stroke-width="1"/></svg>
<div style="position:absolute;left:332px;top:454px;width:241px;height:177px;box-sizing:border-box;border:2px solid #4a4f9a;background:#fff;"></div>
<div style="position:absolute;left:252.5px;width:400px;text-align:center;top:459.88px;font-size:15.5px;line-height:15.5px;color:#000;white-space:pre;-webkit-text-stroke-width:0;">Each 1m of depth has a</div>
<div style="position:absolute;left:252.5px;width:400px;text-align:center;top:477.73px;font-size:15.5px;line-height:15.5px;color:#000;white-space:pre;-webkit-text-stroke-width:0;">graduated colour to distinguish it</div>
<div style="position:absolute;left:252.5px;width:400px;text-align:center;top:513.43px;font-size:15.5px;line-height:15.5px;color:#000;white-space:pre;-webkit-text-stroke-width:0;">Yellow -3m to -2m Depth</div>
<div style="position:absolute;left:252.5px;width:400px;text-align:center;top:531.28px;font-size:15.5px;line-height:15.5px;color:#000;white-space:pre;-webkit-text-stroke-width:0;">Orange -2m to -1m Depth</div>
<div style="position:absolute;left:252.5px;width:400px;text-align:center;top:549.13px;font-size:15.5px;line-height:15.5px;color:#000;white-space:pre;-webkit-text-stroke-width:0;">Red -1m to 0m Depth</div>
<div style="position:absolute;left:252.5px;width:400px;text-align:center;top:566.98px;font-size:15.5px;line-height:15.5px;color:#000;white-space:pre;-webkit-text-stroke-width:0;">Green 0m to +1m Depth</div>
<div style="position:absolute;left:252.5px;width:400px;text-align:center;top:584.83px;font-size:15.5px;line-height:15.5px;color:#000;white-space:pre;-webkit-text-stroke-width:0;">Blue +1m to +2m Depth</div>
<div style="position:absolute;left:252.5px;width:400px;text-align:center;top:602.68px;font-size:15.5px;line-height:15.5px;color:#000;white-space:pre;-webkit-text-stroke-width:0;">Cyan +2m to +3m Depth</div>
</body></html>
